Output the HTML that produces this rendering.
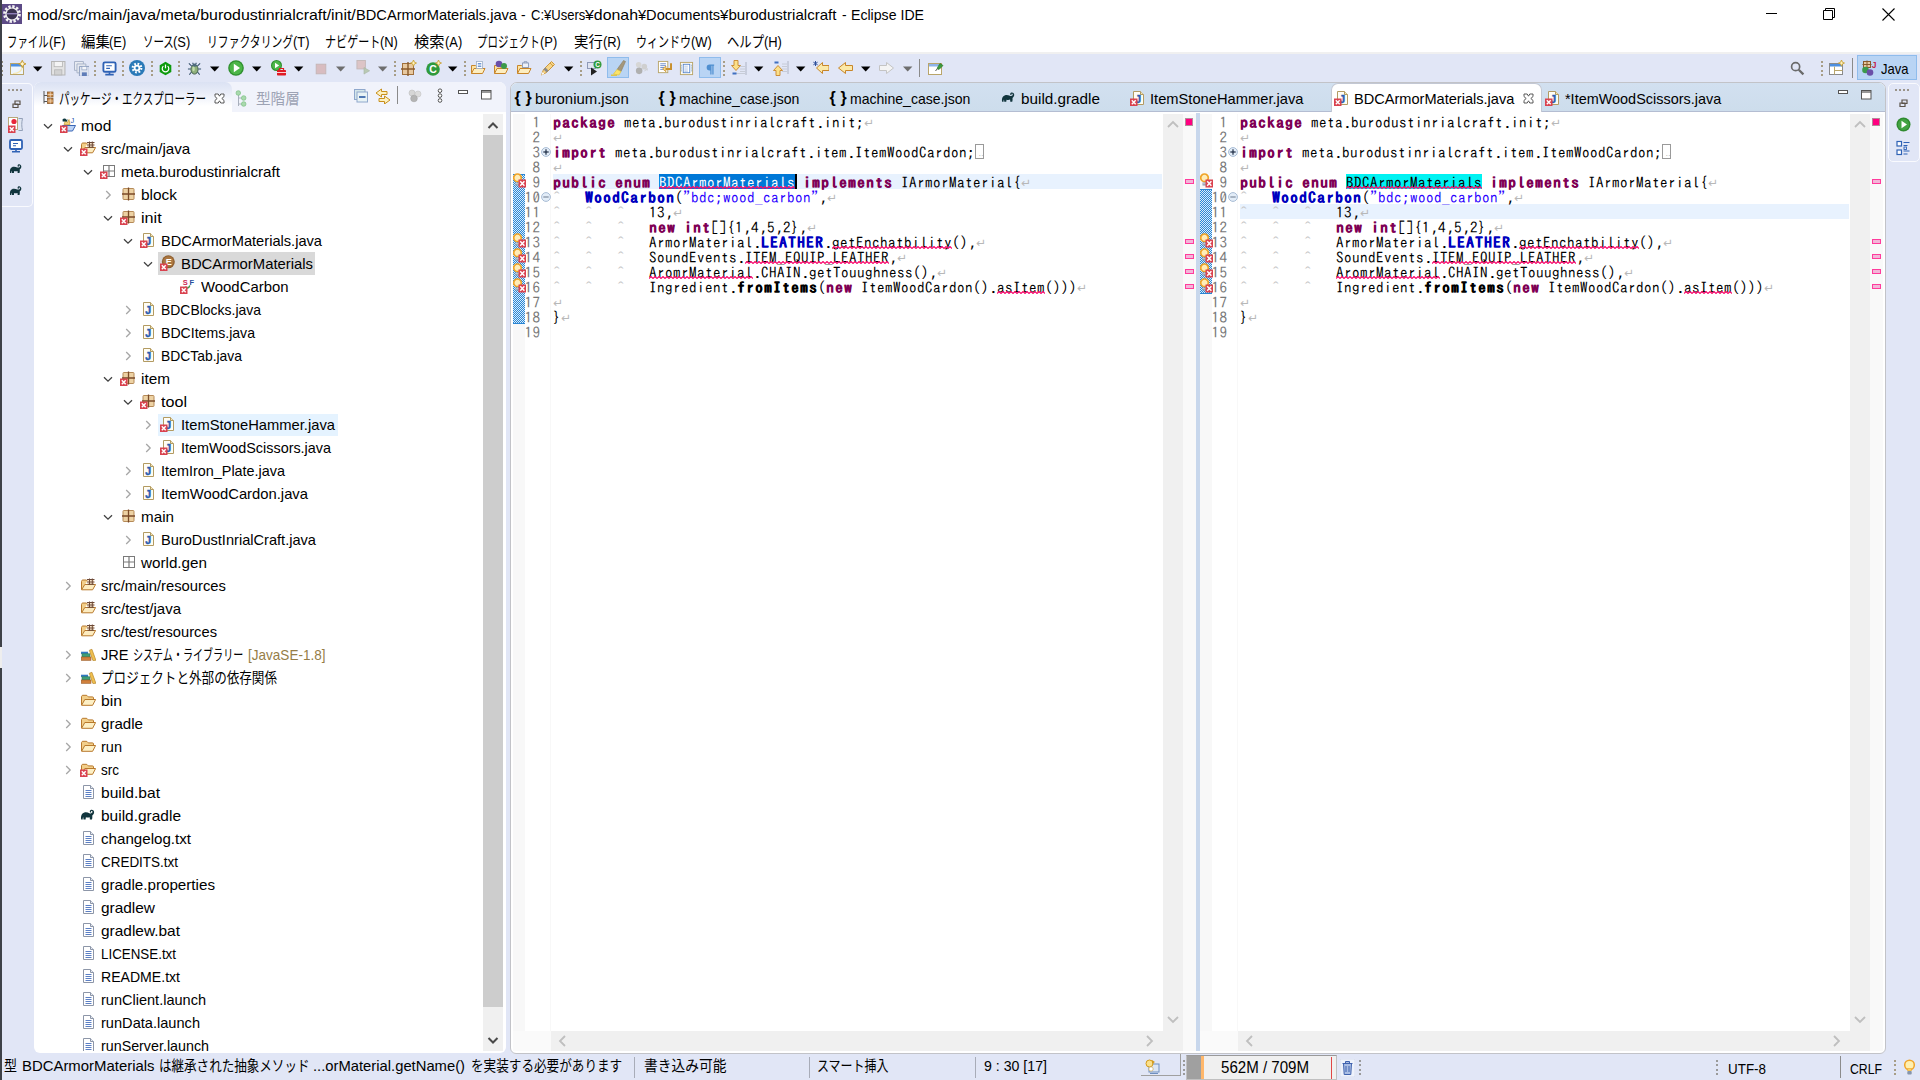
<!DOCTYPE html><html lang="ja"><head><meta charset="utf-8"><title>Eclipse IDE</title><style>
html,body{margin:0;padding:0}
body{width:1920px;height:1080px;overflow:hidden;background:#e1e6f6;position:relative;font-family:'Liberation Sans','Noto Sans CJK JP',sans-serif;font-size:15px}
div,svg,.t{position:absolute}
.t{white-space:pre;line-height:20px}
.r{display:inline-block;white-space:pre}
.r>span{display:inline-block;transform-origin:0 50%;white-space:pre}
.code{font-family:'IPAGothic','Liberation Mono',monospace;font-size:15px;letter-spacing:.5px;line-height:15px;height:15px;white-space:pre;color:#000}
.code b{letter-spacing:1.5px;font-weight:bold;text-shadow:.45px 0 0 currentColor}
.k{color:#7f0055} .s{color:#2a00ff} .f{color:#0000c0}
.ws{color:#c4c4c4}
.p{position:relative;left:2px;font-style:normal}
.er{}
.ln{font-family:'IPAGothic','Liberation Mono',monospace;font-size:15px;letter-spacing:.5px;line-height:15px;height:15px;color:#787878;text-align:right;white-space:pre}
.nl{display:inline-block;width:8px;color:#b8b8b8;letter-spacing:0;font-family:'DejaVu Sans',sans-serif;font-size:12px;vertical-align:top;line-height:16px;font-weight:normal;font-style:normal;text-shadow:none}
.fold{display:inline-block;width:9px;height:15px;border:1px solid #9a9a9a;vertical-align:top;margin-top:-.6px;box-sizing:border-box;font-size:5px;line-height:20px;letter-spacing:0;color:#777;font-style:normal;overflow:hidden;text-align:center}
</style></head><body>
<svg width="0" height="0" style="position:absolute"><defs><symbol id="err" viewBox="0 0 16 16"><rect x="0" y="8.5" width="7.5" height="7.5" fill="#d9424f"/><path d="M1.8 10.3l3.9 3.9M5.7 10.3l-3.9 3.9" stroke="#fff" stroke-width="1.4"/></symbol><symbol id="pkg" viewBox="0 0 16 16"><rect x="3" y="2.500" width="11" height="11" rx=".8" fill="#edd2a4" stroke="#b58a58"/><path d="M8.500 1.500v13M2 8h13" stroke="#7a4a28" stroke-width="1.300"/></symbol><symbol id="pkg_e" viewBox="0 0 16 16"><rect x="3" y="2.500" width="11" height="11" rx=".8" fill="#edd2a4" stroke="#b58a58"/><path d="M8.500 1.500v13M2 8h13" stroke="#7a4a28" stroke-width="1.300"/><rect x="0" y="8.5" width="7.5" height="7.5" fill="#d9424f"/><path d="M1.8 10.3l3.9 3.9M5.7 10.3l-3.9 3.9" stroke="#fff" stroke-width="1.4"/></symbol><symbol id="pkgempty" viewBox="0 0 16 16"><rect x="3.5" y="2.5" width="11" height="11" fill="#fff" stroke="#7a7a7a"/><path d="M9 2.5v11M3.5 8h11" stroke="#7a7a7a" stroke-width="1.2"/></symbol><symbol id="pkgempty_e" viewBox="0 0 16 16"><rect x="3.5" y="2.5" width="11" height="11" fill="#fff" stroke="#7a7a7a"/><path d="M9 2.5v11M3.5 8h11" stroke="#7a7a7a" stroke-width="1.2"/><rect x="0" y="8.5" width="7.5" height="7.5" fill="#d9424f"/><path d="M1.8 10.3l3.9 3.9M5.7 10.3l-3.9 3.9" stroke="#fff" stroke-width="1.4"/></symbol><symbol id="java" viewBox="0 0 16 16"><path d="M3.5 1.5h7l3 3v10h-10z" fill="#fffdf5" stroke="#b39b62"/><path d="M10.5 1.5v3h3" fill="#f3e5b8" stroke="#b39b62"/><text x="5.200" y="12.500" font-family="Liberation Sans,sans-serif" font-weight="bold" font-size="10.500" fill="#2a5db0" stroke="#2a5db0" stroke-width=".5">J</text></symbol><symbol id="java_e" viewBox="0 0 16 16"><path d="M3.5 1.5h7l3 3v10h-10z" fill="#fffdf5" stroke="#b39b62"/><path d="M10.5 1.5v3h3" fill="#f3e5b8" stroke="#b39b62"/><text x="5.200" y="12.500" font-family="Liberation Sans,sans-serif" font-weight="bold" font-size="10.500" fill="#2a5db0" stroke="#2a5db0" stroke-width=".5">J</text><rect x="0" y="8.5" width="7.5" height="7.5" fill="#d9424f"/><path d="M1.8 10.3l3.9 3.9M5.7 10.3l-3.9 3.9" stroke="#fff" stroke-width="1.4"/></symbol><symbol id="file" viewBox="0 0 16 16"><path d="M3.5 1.5h7l3 3v10h-10z" fill="#fff" stroke="#8d96a8"/><path d="M10.5 1.5v3h3" fill="#e6eaf2" stroke="#8d96a8"/><path d="M5.5 6.5h6M5.5 8.5h6M5.5 10.5h6M5.5 12.5h6" stroke="#5b7fc4" stroke-width="1"/></symbol><symbol id="folder" viewBox="0 0 16 16"><path d="M1.500 13V4.800c0-.9.600-1.500 1.500-1.500h3.200c.7 0 1 .3 1.500.9l.6.700h4.200c.7 0 1 .4 1 1v1.600" fill="#f2cf8a" stroke="#b8792c"/><path d="M1.600 13.300l3.200-5.800h10.800l-3 5.800z" fill="#fdf0c6" stroke="#b8792c" stroke-linejoin="round"/></symbol><symbol id="folder_e" viewBox="0 0 16 16"><path d="M1.500 13V4.800c0-.9.600-1.500 1.500-1.500h3.200c.7 0 1 .3 1.500.9l.6.700h4.200c.7 0 1 .4 1 1v1.600" fill="#f2cf8a" stroke="#b8792c"/><path d="M1.600 13.300l3.200-5.800h10.800l-3 5.800z" fill="#fdf0c6" stroke="#b8792c" stroke-linejoin="round"/><rect x="0" y="8.5" width="7.5" height="7.5" fill="#d9424f"/><path d="M1.8 10.3l3.9 3.9M5.7 10.3l-3.9 3.9" stroke="#fff" stroke-width="1.4"/></symbol><symbol id="src" viewBox="0 0 16 16"><path d="M1.500 12.500V4.500c0-.9.600-1.500 1.500-1.500h3.500l1 1" fill="#f2cf8a" stroke="#b8792c"/><path d="M1.600 12.800l3.200-5.300h10.800l-3 5.300z" fill="#fdecc0" stroke="#b8792c" stroke-linejoin="round"/><rect x="7.500" y="2.200" width="6.500" height="5" fill="#f6e3c8" stroke="none"/><path d="M7 2.500h7.500M7 5h7.500M9.500 1.500v6M12.300 1.500v6M7.500 7.300h6.500" stroke="#6e4a38" stroke-width="1" fill="none"/></symbol><symbol id="src_e" viewBox="0 0 16 16"><path d="M1.500 12.500V4.500c0-.9.600-1.500 1.500-1.500h3.500l1 1" fill="#f2cf8a" stroke="#b8792c"/><path d="M1.600 12.800l3.200-5.300h10.800l-3 5.300z" fill="#fdecc0" stroke="#b8792c" stroke-linejoin="round"/><rect x="7.500" y="2.200" width="6.500" height="5" fill="#f6e3c8" stroke="none"/><path d="M7 2.500h7.500M7 5h7.500M9.500 1.500v6M12.300 1.500v6M7.500 7.300h6.500" stroke="#6e4a38" stroke-width="1" fill="none"/><rect x="0" y="8.5" width="7.5" height="7.5" fill="#d9424f"/><path d="M1.8 10.3l3.9 3.9M5.7 10.3l-3.9 3.9" stroke="#fff" stroke-width="1.4"/></symbol><symbol id="proj_e" viewBox="0 0 16 16"><path d="M2.5 8.5h13l-3 5.5h-10z" fill="#bcd3f5" stroke="#3b66b5"/><path d="M4 7.5l1.5-4 2 2 1.5-3 1 5z" fill="#f4d27a" stroke="#c69a2c" stroke-width=".7"/><path d="M2.5 2.5c1-1.5 3.5-1.5 4 .5l1-1-.3 2.5h-4.5z" fill="#0f3a40"/><text x="10.500" y="6" font-family="Liberation Sans,sans-serif" font-size="7.500" fill="#2a5db0">J</text><rect x="0" y="8.5" width="7.5" height="7.5" fill="#d9424f"/><path d="M1.8 10.3l3.9 3.9M5.7 10.3l-3.9 3.9" stroke="#fff" stroke-width="1.4"/></symbol><symbol id="enum_e" viewBox="0 0 16 16"><circle cx="8.300" cy="6.800" r="6.500" fill="#8f5f30"/><circle cx="8.300" cy="6.500" r="5.200" fill="#ab7741"/><text x="5.800" y="10" font-family="Liberation Sans,sans-serif" font-weight="bold" font-size="9" fill="#fff">E</text><rect x="0" y="8.5" width="7.5" height="7.5" fill="#d9424f"/><path d="M1.8 10.3l3.9 3.9M5.7 10.3l-3.9 3.9" stroke="#fff" stroke-width="1.4"/></symbol><symbol id="field_e" viewBox="0 0 16 16"><text x="2.800" y="7.200" font-family="Liberation Sans,sans-serif" font-size="7.500" font-weight="bold" fill="#cc2a52">S</text><text x="9.500" y="7.200" font-family="Liberation Sans,sans-serif" font-size="7.500" font-weight="bold" fill="#27509b">F</text><path d="M5.500 8.500c.8 2.200 3.300 2.200 4.300-1" fill="none" stroke="#3a9a4a" stroke-width="1.500"/><rect x="0" y="8.5" width="7.5" height="7.5" fill="#d9424f"/><path d="M1.8 10.3l3.9 3.9M5.7 10.3l-3.9 3.9" stroke="#fff" stroke-width="1.4"/></symbol><symbol id="lib" viewBox="0 0 16 16"><rect x="1.300" y="6" width="6.500" height="1.800" fill="#2f7fd0" stroke="#2464a8" stroke-width=".5"/><rect x="2" y="7.800" width="8" height="3.200" fill="#3f9f78" stroke="#2c7a58" stroke-width=".6"/><rect x="1.300" y="11" width="9.700" height="3.300" fill="#d0803c" stroke="#9c5a24" stroke-width=".6"/><path d="M9.300 4.300l2.600-1 4 11-3 .2z" fill="#f0c050" stroke="#b8862a" stroke-width=".7"/></symbol><symbol id="gradle" viewBox="0 0 16 16"><path d="M1.2 12.5c-.6-3 .2-6.2 3.2-7 2-.5 3.6.2 5 .7 1.2.4 2.5.2 3-.9.4-.9-.5-1.7-1.2-1.1-.5.4-.1 1 .4.9-.6.8-2 .3-1.8-.9.2-1.5 2.3-2 3.5-.9 1.5 1.4.9 4-1 5.1.2 1.5 0 3-.3 4.1h-2.1l-.2-2.3c-1.2.5-2.6.5-3.8.1l-.3 2.2H3.5l-.3-2.4c-.4.6-.6 1.5-.5 2.4z" fill="#11353d"/></symbol><symbol id="tw_open" viewBox="0 0 16 16"><path d="M4 6.200l4 4 4-4" fill="none" stroke="#404040" stroke-width="1.300"/></symbol><symbol id="tw_closed" viewBox="0 0 16 16"><path d="M6.200 4l4 4-4 4" fill="none" stroke="#a6a6a6" stroke-width="1.300"/></symbol><symbol id="qfix" viewBox="0 0 16 16"><circle cx="4.500" cy="4.800" r="3.800" fill="#ffedb8" stroke="#f0a428" stroke-width="1.700"/><path d="M2.500 9.500h4v3h-4z" fill="#8a96a8"/><path d="M2.500 10.800h4" stroke="#dfe4ec" stroke-width=".8"/><rect x="5.500" y="6.500" width="7.500" height="8" fill="#d9424f"/><path d="M7.200 8.300l4.200 4.400M11.400 8.300l-4.200 4.400" stroke="#fff" stroke-width="1.500"/></symbol></defs></svg>
<div style="left:0px;top:0px;width:1920px;height:52px;background:#fff;"></div>
<div style="left:0px;top:52px;width:1920px;height:2px;background:#f0f0f0;"></div>
<div style="left:0px;top:0px;width:2px;height:1080px;background:#3e4148;"></div>
<div style="left:0px;top:647px;width:2px;height:21px;background:#eeeeee;"></div>
<svg style="left:2px;top:4px;" width="20" height="20" viewBox="0 0 20 20"><rect width="20" height="20" fill="#5c4a86"/><circle cx="10" cy="10" r="7.4" fill="none" stroke="#f2f2f2" stroke-width="3" stroke-dasharray="2.3 1.58"/><circle cx="10" cy="10" r="6.6" fill="#f2f2f2"/><circle cx="10" cy="10" r="5.4" fill="#3a3350"/><rect x="5" y="9" width="10" height="1.4" fill="#8f80b8"/></svg>
<span class="t" style="left:27px;top:5.00px;font-size:15px;color:#000;"><span class="r" style="width:328.80px"><span style="transform:scaleX(1.0602)">mod/src/main/java/meta/burodustinrialcraft/init/</span></span></span>
<span class="t" style="left:355.5px;top:5.00px;font-size:15px;color:#000;"><span class="r" style="width:161.00px"><span style="transform:scaleX(0.9755)">BDCArmorMaterials.java</span></span></span>
<span class="t" style="left:520.7px;top:5.00px;font-size:15px;color:#000;"><span class="r" style="width:4.60px"><span style="transform:scaleX(0.9200)">-</span></span></span>
<span class="t" style="left:530.7px;top:5.00px;font-size:15px;color:#000;"><span class="r" style="width:13.00px"><span style="transform:scaleX(0.8667)">C:</span></span></span>
<span class="t" style="left:543.7px;top:5.00px;font-size:15px;color:#000;"><span class="r" style="width:41.30px"><span style="transform:scaleX(0.8692)">¥Users</span></span></span>
<span class="t" style="left:585px;top:5.00px;font-size:15px;color:#000;"><span class="r" style="width:53.00px"><span style="transform:scaleX(1.0587)">¥donah</span></span></span>
<span class="t" style="left:638px;top:5.00px;font-size:15px;color:#000;"><span class="r" style="width:82.00px"><span style="transform:scaleX(0.9737)">¥Documents</span></span></span>
<span class="t" style="left:720px;top:5.00px;font-size:15px;color:#000;"><span class="r" style="width:116.50px"><span style="transform:scaleX(1.0051)">¥burodustrialcraft</span></span></span>
<span class="t" style="left:842px;top:5.00px;font-size:15px;color:#000;"><span class="r" style="width:4.60px"><span style="transform:scaleX(0.9200)">-</span></span></span>
<span class="t" style="left:850.5px;top:5.00px;font-size:15px;color:#000;"><span class="r" style="width:73.00px"><span style="transform:scaleX(0.9416)">Eclipse IDE</span></span></span>
<div style="left:1766px;top:13px;width:11px;height:1px;background:#000;"></div>
<svg style="left:1823px;top:8px;" width="12" height="12" viewBox="0 0 12 12"><path d="M.5 2.5h9v9h-9zM2.5 2.5v-2h9v9h-2" fill="none" stroke="#000"/></svg>
<svg style="left:1882px;top:8px;" width="13" height="13" viewBox="0 0 13 13"><path d="M.5.5l12 12M12.5.5l-12 12" stroke="#000" stroke-width="1.1"/></svg>
<span class="t" style="left:7px;top:32.10px;font-size:15px;color:#000;"><span class="r" style="width:41.53px"><span style="transform:scaleX(0.6919)">ファイル</span></span><span class="r" style="width:16.47px"><span style="transform:scaleX(0.8600)">(F)</span></span></span>
<span class="t" style="left:80.7px;top:32.10px;font-size:15px;color:#000;"><span class="r" style="width:28.80px"><span style="transform:scaleX(0.9595)">編集</span></span><span class="r" style="width:17.20px"><span style="transform:scaleX(0.8600)">(E)</span></span></span>
<span class="t" style="left:142.7px;top:32.10px;font-size:15px;color:#000;"><span class="r" style="width:30.80px"><span style="transform:scaleX(0.6958)">ソース</span></span><span class="r" style="width:17.20px"><span style="transform:scaleX(0.8600)">(S)</span></span></span>
<span class="t" style="left:206.7px;top:32.10px;font-size:15px;color:#000;"><span class="r" style="width:86.13px"><span style="transform:scaleX(0.7213)">リファクタリング</span></span><span class="r" style="width:16.47px"><span style="transform:scaleX(0.8600)">(T)</span></span></span>
<span class="t" style="left:325px;top:32.10px;font-size:15px;color:#000;"><span class="r" style="width:55.39px"><span style="transform:scaleX(0.7384)">ナビゲート</span></span><span class="r" style="width:17.91px"><span style="transform:scaleX(0.8600)">(N)</span></span></span>
<span class="t" style="left:414px;top:32.10px;font-size:15px;color:#000;"><span class="r" style="width:30.50px"><span style="transform:scaleX(1.0161)">検索</span></span><span class="r" style="width:17.20px"><span style="transform:scaleX(0.8600)">(A)</span></span></span>
<span class="t" style="left:477.3px;top:32.10px;font-size:15px;color:#000;"><span class="r" style="width:62.80px"><span style="transform:scaleX(0.6977)">プロジェクト</span></span><span class="r" style="width:17.20px"><span style="transform:scaleX(0.8600)">(P)</span></span></span>
<span class="t" style="left:574px;top:32.10px;font-size:15px;color:#000;"><span class="r" style="width:28.79px"><span style="transform:scaleX(0.9591)">実行</span></span><span class="r" style="width:17.91px"><span style="transform:scaleX(0.8600)">(R)</span></span></span>
<span class="t" style="left:636px;top:32.10px;font-size:15px;color:#000;"><span class="r" style="width:54.93px"><span style="transform:scaleX(0.7322)">ウィンドウ</span></span><span class="r" style="width:20.77px"><span style="transform:scaleX(0.8600)">(W)</span></span></span>
<span class="t" style="left:727.3px;top:32.10px;font-size:15px;color:#000;"><span class="r" style="width:37.09px"><span style="transform:scaleX(0.8239)">ヘルプ</span></span><span class="r" style="width:17.91px"><span style="transform:scaleX(0.8600)">(H)</span></span></span>
<div style="left:2px;top:83px;width:30.5px;height:123.5px;background:none;border:1.500px solid #f9fafe;border-left:none;border-radius:0 5px 5px 0;box-sizing:border-box"></div>
<div style="left:8px;top:89px;width:2px;height:2px;background:#9a948a;"></div>
<div style="left:12px;top:89px;width:2px;height:2px;background:#9a948a;"></div>
<div style="left:16px;top:89px;width:2px;height:2px;background:#9a948a;"></div>
<div style="left:20px;top:89px;width:2px;height:2px;background:#9a948a;"></div>
<svg style="left:11.5px;top:99.5px;" width="9" height="9" viewBox="0 0 9 9"><path d="M3 1h5v3.500h-5zM1 4h5v3.500h-5z" fill="#e1e6f6" stroke="#5a5148" stroke-width="1.200"/></svg>
<svg style="left:8px;top:117px;" width="16" height="16" viewBox="0 0 16 16"><rect x=".5" y=".5" width="9" height="12" fill="#fff" stroke="#b8a97a"/><circle cx="6" cy="4.5" r="2.6" fill="#e8273a"/><path d="M10.5 1.5h4c-1 4-1 8 0 12h-4" fill="#dfe6f2" stroke="#93a0b8"/><rect x="0" y="8.5" width="7.5" height="7.5" fill="#d9424f"/><path d="M1.8 10.3l3.9 3.9M5.7 10.3l-3.9 3.9" stroke="#fff" stroke-width="1.4"/></svg>
<svg style="left:9px;top:139px;" width="14" height="14" viewBox="0 0 14 14"><rect x="1" y="1" width="12" height="9" rx="1.2" fill="#fff" stroke="#2f62b5" stroke-width="1.8"/><path d="M4 4.5h5M4 6.8h3" stroke="#2f62b5" stroke-width="1.1"/><path d="M3 12.8h8M7 10v2.5" stroke="#2f62b5" stroke-width="1.6"/></svg>
<svg style="left:9px;top:162px;" width="14" height="14"><use href="#gradle"/></svg>
<svg style="left:9px;top:184px;" width="14" height="14"><use href="#gradle"/></svg>
<div style="left:34px;top:82px;width:472px;height:971px;background:#fff;border-radius:7px 7px 6px 6px;overflow:hidden"></div>
<div style="left:34px;top:82px;width:472px;height:29.5px;background:#f1f3fb;border-radius:7px 7px 0 0"></div>
<div style="left:34px;top:82px;width:197.5px;height:30px;background:linear-gradient(#dbe2f3,#e9edf8 35%,#fff 80%);border-radius:7px 7px 0 0"></div>
<svg style="left:42.5px;top:91px;" width="11" height="13" viewBox="0 0 11 13"><path d="M1 0v12.500M1 4.500h3M1 10.500h3" stroke="#555" fill="none"/><rect x="4.500" y="1" width="5.500" height="5" fill="#c98a4a" stroke="#8a5a2b" stroke-width=".8"/><rect x="4.500" y="7.500" width="5.500" height="5" fill="#c98a4a" stroke="#8a5a2b" stroke-width=".8"/><path d="M7.250 1v5M7.250 7.500v5M4.500 3.500h5.500M4.500 10h5.500" stroke="#f3dcc0" stroke-width=".7"/></svg>
<span class="t" style="left:58.5px;top:88.80px;font-size:15px;color:#000;"><span class="r" style="width:147.00px"><span style="transform:scaleX(0.7025)">パッケージ・エクスプローラー</span></span></span>
<svg style="left:213.5px;top:92.8px;" width="11" height="11" viewBox="0 0 11 11"><path d="M1 1l3.2 0 1.3 2.2L6.8 1 10 1 10 3.6 7.8 5.5 10 7.4 10 10 6.8 10 5.5 7.8 4.2 10 1 10 1 7.4 3.2 5.5 1 3.6z" fill="#fff" stroke="#484848" stroke-width=".900"/></svg>
<svg style="left:235px;top:89.5px;" width="12" height="17" viewBox="0 0 12 17"><path d="M3.500 5v11M3.500 8h3M3.500 14h3" stroke="#a9b0bd" fill="none"/><circle cx="3.300" cy="3" r="2.300" fill="#a9d9ad" stroke="#7cc084" stroke-width=".7"/><circle cx="8.700" cy="8" r="2.300" fill="#a9d9ad" stroke="#7cc084" stroke-width=".7"/><circle cx="8.700" cy="14" r="2.300" fill="#a9d9ad" stroke="#7cc084" stroke-width=".7"/></svg>
<span class="t" style="left:255.6px;top:88.80px;font-size:15px;color:#9da3b4;"><span class="r" style="width:43.80px"><span style="transform:scaleX(0.9730)">型階層</span></span></span>
<svg style="left:353.5px;top:88.5px;" width="14" height="14" viewBox="0 0 14 14"><rect x=".5" y=".5" width="10.500" height="10" fill="#d4e6ea" stroke="#8fa8cc"/><rect x="3" y="3" width="10.500" height="10" fill="#e9f3f5" stroke="#8fa8cc"/><path d="M5 8h6.500" stroke="#1c4f9c" stroke-width="1.500"/></svg>
<svg style="left:375px;top:87.5px;" width="16" height="16" viewBox="0 0 16 16"><path d="M12 3.500H6.500V1L1 5l5.500 4V6.500H12z" fill="#fdf0c0" stroke="#c8901c" stroke-linejoin="round"/><path d="M4 10.500h5.500V8l5.500 4-5.500 4v-2.500H4z" fill="#fdf0c0" stroke="#c8901c" stroke-linejoin="round"/></svg>
<div style="left:397px;top:86px;width:1px;height:18px;background:#8a8a8a;"></div>
<svg style="left:408px;top:89px;" width="14" height="14" viewBox="0 0 14 14"><circle cx="4" cy="4" r="3" fill="#d6d6d6" stroke="#bdbdbd" stroke-width=".6"/><circle cx="10" cy="5" r="3" fill="#dcdcdc" stroke="#c4c4c4" stroke-width=".6"/><circle cx="6" cy="9.500" r="3.300" fill="#b4b4b4" stroke="#a4a4a4" stroke-width=".6"/></svg>
<svg style="left:437.4px;top:87.8px;" width="6" height="16" viewBox="0 0 6 16"><circle cx="3" cy="2.700" r="1.800" fill="#fff" stroke="#444" stroke-width=".9"/><circle cx="3" cy="7.600" r="1.800" fill="#fff" stroke="#444" stroke-width=".9"/><circle cx="3" cy="12.500" r="1.800" fill="#fff" stroke="#444" stroke-width=".9"/></svg>
<div style="left:458px;top:90px;width:10px;height:4px;background:#fff;border:1px solid #555;box-sizing:border-box"></div>
<svg style="left:481px;top:90px;" width="11" height="10" viewBox="0 0 11 10"><rect x=".5" y=".5" width="9.500" height="8.500" fill="#fff" stroke="#555"/><path d="M.5 2h9.500" stroke="#555" stroke-width="1.200"/></svg>
<div style="left:483px;top:114px;width:20px;height:937px;background:#f0f0f0;"></div>
<div style="left:483px;top:135px;width:20px;height:872.3px;background:#cdcdcd;"></div>
<svg style="left:486px;top:119.5px;" width="14" height="10" viewBox="0 0 14 10"><path d="M2.500 8l4.500-4.500 4.500 4.500" fill="none" stroke="#4a4a4a" stroke-width="2"/></svg>
<svg style="left:486px;top:1035.5px;" width="14" height="10" viewBox="0 0 14 10"><path d="M2.500 2l4.500 4.500 4.500-4.500" fill="none" stroke="#4a4a4a" stroke-width="2"/></svg>
<div style="left:34px;top:112px;width:449px;height:939px;overflow:hidden">
<div style="left:124px;top:140.3px;width:157px;height:22.5px;background:#d9d9d9;"></div>
<div style="left:124px;top:302px;width:180px;height:22px;background:#e5f3ff;"></div>
<svg style="left:5.5px;top:6px;" width="16" height="16"><use href="#tw_open"/></svg>
<svg style="left:26px;top:5px;" width="16" height="16"><use href="#proj_e"/></svg>
<span class="t" style="left:47px;top:4.00px;font-size:15px;color:#000;"><span class="r" style="width:30.30px"><span style="transform:scaleX(1.0381)">mod</span></span></span>
<svg style="left:25.5px;top:29px;" width="16" height="16"><use href="#tw_open"/></svg>
<svg style="left:46px;top:28px;" width="16" height="16"><use href="#src_e"/></svg>
<span class="t" style="left:67px;top:27.00px;font-size:15px;color:#000;"><span class="r" style="width:89.30px"><span style="transform:scaleX(1.0106)">src/main/java</span></span></span>
<svg style="left:45.5px;top:52px;" width="16" height="16"><use href="#tw_open"/></svg>
<svg style="left:66px;top:51px;" width="16" height="16"><use href="#pkgempty_e"/></svg>
<span class="t" style="left:87px;top:50.00px;font-size:15px;color:#000;"><span class="r" style="width:159.00px"><span style="transform:scaleX(1.0144)">meta.burodustinrialcraft</span></span></span>
<svg style="left:65.5px;top:75px;" width="16" height="16"><use href="#tw_closed"/></svg>
<svg style="left:86px;top:74px;" width="16" height="16"><use href="#pkg"/></svg>
<span class="t" style="left:107px;top:73.00px;font-size:15px;color:#000;"><span class="r" style="width:36.00px"><span style="transform:scaleX(1.0277)">block</span></span></span>
<svg style="left:65.5px;top:98px;" width="16" height="16"><use href="#tw_open"/></svg>
<svg style="left:86px;top:97px;" width="16" height="16"><use href="#pkg_e"/></svg>
<span class="t" style="left:107px;top:96.00px;font-size:15px;color:#000;"><span class="r" style="width:20.70px"><span style="transform:scaleX(1.0788)">init</span></span></span>
<svg style="left:85.5px;top:121px;" width="16" height="16"><use href="#tw_open"/></svg>
<svg style="left:106px;top:120px;" width="16" height="16"><use href="#java_e"/></svg>
<span class="t" style="left:127px;top:119.00px;font-size:15px;color:#000;"><span class="r" style="width:161.00px"><span style="transform:scaleX(0.9755)">BDCArmorMaterials.java</span></span></span>
<svg style="left:105.5px;top:144px;" width="16" height="16"><use href="#tw_open"/></svg>
<svg style="left:126px;top:143px;" width="16" height="16"><use href="#enum_e"/></svg>
<span class="t" style="left:147px;top:142.00px;font-size:15px;color:#000;"><span class="r" style="width:132.00px"><span style="transform:scaleX(0.9898)">BDCArmorMaterials</span></span></span>
<svg style="left:146px;top:166px;" width="16" height="16"><use href="#field_e"/></svg>
<span class="t" style="left:167px;top:165.00px;font-size:15px;color:#000;"><span class="r" style="width:87.50px"><span style="transform:scaleX(0.9929)">WoodCarbon</span></span></span>
<svg style="left:85.5px;top:190px;" width="16" height="16"><use href="#tw_closed"/></svg>
<svg style="left:106px;top:189px;" width="16" height="16"><use href="#java"/></svg>
<span class="t" style="left:127px;top:188.00px;font-size:15px;color:#000;"><span class="r" style="width:100.00px"><span style="transform:scaleX(0.9298)">BDCBlocks.java</span></span></span>
<svg style="left:85.5px;top:213px;" width="16" height="16"><use href="#tw_closed"/></svg>
<svg style="left:106px;top:212px;" width="16" height="16"><use href="#java"/></svg>
<span class="t" style="left:127px;top:211.00px;font-size:15px;color:#000;"><span class="r" style="width:94.00px"><span style="transform:scaleX(0.9397)">BDCItems.java</span></span></span>
<svg style="left:85.5px;top:236px;" width="16" height="16"><use href="#tw_closed"/></svg>
<svg style="left:106px;top:235px;" width="16" height="16"><use href="#java"/></svg>
<span class="t" style="left:127px;top:234.00px;font-size:15px;color:#000;"><span class="r" style="width:81.00px"><span style="transform:scaleX(0.9252)">BDCTab.java</span></span></span>
<svg style="left:65.5px;top:259px;" width="16" height="16"><use href="#tw_open"/></svg>
<svg style="left:86px;top:258px;" width="16" height="16"><use href="#pkg_e"/></svg>
<span class="t" style="left:107px;top:257.00px;font-size:15px;color:#000;"><span class="r" style="width:29.00px"><span style="transform:scaleX(1.0232)">item</span></span></span>
<svg style="left:85.5px;top:282px;" width="16" height="16"><use href="#tw_open"/></svg>
<svg style="left:106px;top:281px;" width="16" height="16"><use href="#pkg_e"/></svg>
<span class="t" style="left:127px;top:280.00px;font-size:15px;color:#000;"><span class="r" style="width:26.00px"><span style="transform:scaleX(1.0749)">tool</span></span></span>
<svg style="left:105.5px;top:305px;" width="16" height="16"><use href="#tw_closed"/></svg>
<svg style="left:126px;top:304px;" width="16" height="16"><use href="#java_e"/></svg>
<span class="t" style="left:147px;top:303.00px;font-size:15px;color:#000;"><span class="r" style="width:154.00px"><span style="transform:scaleX(0.9826)">ItemStoneHammer.java</span></span></span>
<svg style="left:105.5px;top:328px;" width="16" height="16"><use href="#tw_closed"/></svg>
<svg style="left:126px;top:327px;" width="16" height="16"><use href="#java_e"/></svg>
<span class="t" style="left:147px;top:326.00px;font-size:15px;color:#000;"><span class="r" style="width:150.00px"><span style="transform:scaleX(0.9588)">ItemWoodScissors.java</span></span></span>
<svg style="left:85.5px;top:351px;" width="16" height="16"><use href="#tw_closed"/></svg>
<svg style="left:106px;top:350px;" width="16" height="16"><use href="#java"/></svg>
<span class="t" style="left:127px;top:349.00px;font-size:15px;color:#000;"><span class="r" style="width:124.00px"><span style="transform:scaleX(0.9594)">ItemIron_Plate.java</span></span></span>
<svg style="left:85.5px;top:374px;" width="16" height="16"><use href="#tw_closed"/></svg>
<svg style="left:106px;top:373px;" width="16" height="16"><use href="#java"/></svg>
<span class="t" style="left:127px;top:372.00px;font-size:15px;color:#000;"><span class="r" style="width:147.00px"><span style="transform:scaleX(0.9868)">ItemWoodCardon.java</span></span></span>
<svg style="left:65.5px;top:397px;" width="16" height="16"><use href="#tw_open"/></svg>
<svg style="left:86px;top:396px;" width="16" height="16"><use href="#pkg"/></svg>
<span class="t" style="left:107px;top:395.00px;font-size:15px;color:#000;"><span class="r" style="width:33.00px"><span style="transform:scaleX(1.0149)">main</span></span></span>
<svg style="left:85.5px;top:420px;" width="16" height="16"><use href="#tw_closed"/></svg>
<svg style="left:106px;top:419px;" width="16" height="16"><use href="#java"/></svg>
<span class="t" style="left:127px;top:418.00px;font-size:15px;color:#000;"><span class="r" style="width:155.00px"><span style="transform:scaleX(0.9734)">BuroDustInrialCraft.java</span></span></span>
<svg style="left:86px;top:442px;" width="16" height="16"><use href="#pkgempty"/></svg>
<span class="t" style="left:107px;top:441.00px;font-size:15px;color:#000;"><span class="r" style="width:66.00px"><span style="transform:scaleX(1.0147)">world.gen</span></span></span>
<svg style="left:25.5px;top:466px;" width="16" height="16"><use href="#tw_closed"/></svg>
<svg style="left:46px;top:465px;" width="16" height="16"><use href="#src"/></svg>
<span class="t" style="left:67px;top:464.00px;font-size:15px;color:#000;"><span class="r" style="width:125.00px"><span style="transform:scaleX(0.9866)">src/main/resources</span></span></span>
<svg style="left:46px;top:488px;" width="16" height="16"><use href="#src"/></svg>
<span class="t" style="left:67px;top:487.00px;font-size:15px;color:#000;"><span class="r" style="width:80.00px"><span style="transform:scaleX(0.9996)">src/test/java</span></span></span>
<svg style="left:46px;top:511px;" width="16" height="16"><use href="#src"/></svg>
<span class="t" style="left:67px;top:510.00px;font-size:15px;color:#000;"><span class="r" style="width:116.00px"><span style="transform:scaleX(0.9799)">src/test/resources</span></span></span>
<svg style="left:25.5px;top:535px;" width="16" height="16"><use href="#tw_closed"/></svg>
<svg style="left:46px;top:534px;" width="16" height="16"><use href="#lib"/></svg>
<span class="t" style="left:67px;top:533.00px;font-size:15px;color:#000;"><span class="r" style="width:31.70px"><span style="transform:scaleX(0.9750)">JRE </span></span><span class="r" style="width:110.30px"><span style="transform:scaleX(0.6702)">システム・ライブラリー</span></span></span>
<span class="t" style="left:213.5px;top:533.00px;font-size:15px;color:#957d47;"><span class="r" style="width:77.50px"><span style="transform:scaleX(0.9023)">[JavaSE-1.8]</span></span></span>
<svg style="left:25.5px;top:558px;" width="16" height="16"><use href="#tw_closed"/></svg>
<svg style="left:46px;top:557px;" width="16" height="16"><use href="#lib"/></svg>
<span class="t" style="left:67px;top:556.00px;font-size:15px;color:#000;"><span class="r" style="width:176.00px"><span style="transform:scaleX(0.8380)">プロジェクトと外部の依存関係</span></span></span>
<svg style="left:46px;top:580px;" width="16" height="16"><use href="#folder"/></svg>
<span class="t" style="left:67px;top:579.00px;font-size:15px;color:#000;"><span class="r" style="width:21.00px"><span style="transform:scaleX(1.0484)">bin</span></span></span>
<svg style="left:25.5px;top:604px;" width="16" height="16"><use href="#tw_closed"/></svg>
<svg style="left:46px;top:603px;" width="16" height="16"><use href="#folder"/></svg>
<span class="t" style="left:67px;top:602.00px;font-size:15px;color:#000;"><span class="r" style="width:42.00px"><span style="transform:scaleX(1.0071)">gradle</span></span></span>
<svg style="left:25.5px;top:627px;" width="16" height="16"><use href="#tw_closed"/></svg>
<svg style="left:46px;top:626px;" width="16" height="16"><use href="#folder"/></svg>
<span class="t" style="left:67px;top:625.00px;font-size:15px;color:#000;"><span class="r" style="width:21.00px"><span style="transform:scaleX(0.9683)">run</span></span></span>
<svg style="left:25.5px;top:650px;" width="16" height="16"><use href="#tw_closed"/></svg>
<svg style="left:46px;top:649px;" width="16" height="16"><use href="#folder_e"/></svg>
<span class="t" style="left:67px;top:648.00px;font-size:15px;color:#000;"><span class="r" style="width:18.00px"><span style="transform:scaleX(0.9000)">src</span></span></span>
<svg style="left:46px;top:672px;" width="16" height="16"><use href="#file"/></svg>
<span class="t" style="left:67px;top:671.00px;font-size:15px;color:#000;"><span class="r" style="width:59.00px"><span style="transform:scaleX(1.0402)">build.bat</span></span></span>
<svg style="left:46px;top:695px;" width="16" height="16"><use href="#gradle"/></svg>
<span class="t" style="left:67px;top:694.00px;font-size:15px;color:#000;"><span class="r" style="width:80.00px"><span style="transform:scaleX(1.0314)">build.gradle</span></span></span>
<svg style="left:46px;top:718px;" width="16" height="16"><use href="#file"/></svg>
<span class="t" style="left:67px;top:717.00px;font-size:15px;color:#000;"><span class="r" style="width:90.00px"><span style="transform:scaleX(1.0086)">changelog.txt</span></span></span>
<svg style="left:46px;top:741px;" width="16" height="16"><use href="#file"/></svg>
<span class="t" style="left:67px;top:740.00px;font-size:15px;color:#000;"><span class="r" style="width:77.00px"><span style="transform:scaleX(0.8970)">CREDITS.txt</span></span></span>
<svg style="left:46px;top:764px;" width="16" height="16"><use href="#file"/></svg>
<span class="t" style="left:67px;top:763.00px;font-size:15px;color:#000;"><span class="r" style="width:114.00px"><span style="transform:scaleX(1.0126)">gradle.properties</span></span></span>
<svg style="left:46px;top:787px;" width="16" height="16"><use href="#file"/></svg>
<span class="t" style="left:67px;top:786.00px;font-size:15px;color:#000;"><span class="r" style="width:54.00px"><span style="transform:scaleX(1.0280)">gradlew</span></span></span>
<svg style="left:46px;top:810px;" width="16" height="16"><use href="#file"/></svg>
<span class="t" style="left:67px;top:809.00px;font-size:15px;color:#000;"><span class="r" style="width:79.00px"><span style="transform:scaleX(1.0295)">gradlew.bat</span></span></span>
<svg style="left:46px;top:833px;" width="16" height="16"><use href="#file"/></svg>
<span class="t" style="left:67px;top:832.00px;font-size:15px;color:#000;"><span class="r" style="width:75.00px"><span style="transform:scaleX(0.8907)">LICENSE.txt</span></span></span>
<svg style="left:46px;top:856px;" width="16" height="16"><use href="#file"/></svg>
<span class="t" style="left:67px;top:855.00px;font-size:15px;color:#000;"><span class="r" style="width:79.00px"><span style="transform:scaleX(0.9384)">README.txt</span></span></span>
<svg style="left:46px;top:879px;" width="16" height="16"><use href="#file"/></svg>
<span class="t" style="left:67px;top:878.00px;font-size:15px;color:#000;"><span class="r" style="width:105.00px"><span style="transform:scaleX(0.9686)">runClient.launch</span></span></span>
<svg style="left:46px;top:902px;" width="16" height="16"><use href="#file"/></svg>
<span class="t" style="left:67px;top:901.00px;font-size:15px;color:#000;"><span class="r" style="width:99.00px"><span style="transform:scaleX(0.9731)">runData.launch</span></span></span>
<svg style="left:46px;top:925px;" width="16" height="16"><use href="#file"/></svg>
<span class="t" style="left:67px;top:924.00px;font-size:15px;color:#000;"><span class="r" style="width:108.00px"><span style="transform:scaleX(0.9523)">runServer.launch</span></span></span>
</div>
<div style="left:510px;top:82px;width:1376px;height:972px;background:#fff;border:1px solid #c2c3c8;border-radius:7px 7px 6px 6px;box-sizing:border-box;overflow:hidden"></div>
<div style="left:511px;top:83px;width:1374px;height:28px;background:linear-gradient(#d2e0f0,#cdddec);border-radius:6px 6px 0 0"></div>
<div style="left:511px;top:111px;width:1374px;height:1px;background:#b4bdd2;"></div>
<div style="left:1330.5px;top:82.5px;width:211px;height:29.5px;background:#fff;border-radius:7px 7px 0 0;border:1px solid #c3c8d4;border-bottom:none;box-sizing:border-box"></div>
<span class="t" style="left:514.5px;top:87.76px;font-size:16px;color:#000;font-weight:bold;">{</span>
<span class="t" style="left:525.5px;top:87.76px;font-size:16px;color:#000;font-weight:bold;">}</span>
<span class="t" style="left:535px;top:89.00px;font-size:15px;color:#000;"><span class="r" style="width:93.70px"><span style="transform:scaleX(0.9945)">buronium.json</span></span></span>
<span class="t" style="left:658.5px;top:87.76px;font-size:16px;color:#000;font-weight:bold;">{</span>
<span class="t" style="left:669.5px;top:87.76px;font-size:16px;color:#000;font-weight:bold;">}</span>
<span class="t" style="left:679px;top:89.00px;font-size:15px;color:#000;"><span class="r" style="width:120.30px"><span style="transform:scaleX(0.9368)">machine_case.json</span></span></span>
<span class="t" style="left:829.5px;top:87.76px;font-size:16px;color:#000;font-weight:bold;">{</span>
<span class="t" style="left:840.5px;top:87.76px;font-size:16px;color:#000;font-weight:bold;">}</span>
<span class="t" style="left:850px;top:89.00px;font-size:15px;color:#000;"><span class="r" style="width:120.30px"><span style="transform:scaleX(0.9368)">machine_case.json</span></span></span>
<svg style="left:1001px;top:90px;" width="15" height="15"><use href="#gradle"/></svg>
<span class="t" style="left:1021px;top:89.00px;font-size:15px;color:#000;"><span class="r" style="width:79.00px"><span style="transform:scaleX(1.0185)">build.gradle</span></span></span>
<svg style="left:1129.8px;top:90.3px;" width="16" height="16"><use href="#java_e"/></svg>
<span class="t" style="left:1149.5px;top:89.00px;font-size:15px;color:#000;"><span class="r" style="width:153.50px"><span style="transform:scaleX(0.9794)">ItemStoneHammer.java</span></span></span>
<svg style="left:1334px;top:90.3px;" width="16" height="16"><use href="#java_e"/></svg>
<span class="t" style="left:1354px;top:89.00px;font-size:15px;color:#000;"><span class="r" style="width:160.30px"><span style="transform:scaleX(0.9712)">BDCArmorMaterials.java</span></span></span>
<svg style="left:1522.5px;top:92.8px;" width="11" height="11" viewBox="0 0 11 11"><path d="M1 1l3.2 0 1.3 2.2L6.8 1 10 1 10 3.6 7.800 5.500 10 7.400 10 10 6.800 10 5.500 7.800 4.200 10 1 10 1 7.400 3.200 5.500 1 3.600z" fill="#fff" stroke="#484848" stroke-width=".900"/></svg>
<svg style="left:1545px;top:90.3px;" width="16" height="16"><use href="#java_e"/></svg>
<span class="t" style="left:1564.5px;top:89.00px;font-size:15px;color:#000;"><span class="r" style="width:156.20px"><span style="transform:scaleX(0.9624)">*ItemWoodScissors.java</span></span></span>
<div style="left:1838px;top:90px;width:10px;height:4px;background:#fff;border:1px solid #555;box-sizing:border-box"></div>
<svg style="left:1861px;top:90px;" width="11" height="10" viewBox="0 0 11 10"><rect x=".5" y=".5" width="9.500" height="8.500" fill="#fff" stroke="#555"/><path d="M.5 2h9.500" stroke="#555" stroke-width="1.200"/></svg>
<div style="left:1196px;top:113px;width:4px;height:938px;background:#c8d7ec;"></div>
<style>.selA{color:#fff}</style>
<div style="left:513px;top:114px;width:12px;height:917px;background:#f8f8f8;"></div>
<div style="left:550px;top:114px;width:1px;height:917px;background:#f8f8f8;"></div>
<svg style="left:513px;top:174px" width="12" height="150"><defs><pattern id="d513" width="2" height="2" patternUnits="userSpaceOnUse"><rect width="2" height="2" fill="#d8ecfb"/><rect width="1" height="1" fill="#2a86d4"/><rect x="1" y="1" width="1" height="1" fill="#2a86d4"/></pattern></defs><rect width="12" height="100%" fill="url(#d513)"/><rect width="12" height="1" fill="#2a86d4"/><rect y="149" width="12" height="1" fill="#2a86d4"/></svg>
<svg style="left:513px;top:173.3px" width="13" height="15" viewBox="0 0 13 15"><use href="#qfix" width="16" height="16"/></svg>
<svg style="left:513px;top:233.3px" width="13" height="15" viewBox="0 0 13 15"><use href="#qfix" width="16" height="16"/></svg>
<svg style="left:513px;top:248.3px" width="13" height="15" viewBox="0 0 13 15"><use href="#qfix" width="16" height="16"/></svg>
<svg style="left:513px;top:263.3px" width="13" height="15" viewBox="0 0 13 15"><use href="#qfix" width="16" height="16"/></svg>
<svg style="left:513px;top:278.3px" width="13" height="15" viewBox="0 0 13 15"><use href="#qfix" width="16" height="16"/></svg>
<div style="left:553px;top:174px;width:609px;height:15px;background:#e8f2fe;"></div>
<div style="left:659px;top:174px;width:136px;height:15px;background:#0078d7;"></div>
<div class="ln" style="left:516px;top:114.7px;width:24.5px">1</div>
<div class="code" style="left:553px;top:114.6px"><b class="k">package</b> meta<i class="p">.</i>burodustinrialcraft<i class="p">.</i>init;<i class="nl">↵</i></div>
<div class="ln" style="left:516px;top:129.7px;width:24.5px">2</div>
<div class="code" style="left:553px;top:129.6px"><i class="nl">↵</i></div>
<div class="ln" style="left:516px;top:144.7px;width:24.5px">3</div>
<div class="code" style="left:553px;top:144.6px"><b class="k">import</b> meta<i class="p">.</i>burodustinrialcraft<i class="p">.</i>item<i class="p">.</i>ItemWoodCardon;<i class="fold"><i class="p">.</i><i class="p">.</i></i></div>
<div class="ln" style="left:516px;top:159.7px;width:24.5px">8</div>
<div class="code" style="left:553px;top:159.6px"><i class="nl">↵</i></div>
<div class="ln" style="left:516px;top:174.7px;width:24.5px">9</div>
<div class="code" style="left:553px;top:174.6px"><b class="k">public</b> <b class="k">enum</b> <span class="er selA">BDCArmorMaterials</span> <b class="k">implements</b> IArmorMaterial{<i class="nl">↵</i></div>
<div class="ln" style="left:516px;top:189.7px;width:24.5px">10</div>
<div class="code" style="left:553px;top:189.6px"><span class="ws">^   </span><b class="f">WoodCarbon</b>(<span class="s">"bdc;wood_carbon"</span><i class="p">,</i><i class="nl">↵</i></div>
<div class="ln" style="left:516px;top:204.7px;width:24.5px">11</div>
<div class="code" style="left:553px;top:204.6px"><span class="ws">^   ^   ^   </span>13<i class="p">,</i><i class="nl">↵</i></div>
<div class="ln" style="left:516px;top:219.7px;width:24.5px">12</div>
<div class="code" style="left:553px;top:219.6px"><span class="ws">^   ^   ^   </span><b class="k">new</b> <b class="k">int</b>[]{1<i class="p">,</i>4<i class="p">,</i>5<i class="p">,</i>2}<i class="p">,</i><i class="nl">↵</i></div>
<div class="ln" style="left:516px;top:234.7px;width:24.5px">13</div>
<div class="code" style="left:553px;top:234.6px"><span class="ws">^   ^   ^   </span>ArmorMaterial<i class="p">.</i><b class="f">LEATHER</b><i class="p">.</i><span class="er">getEnchatbility</span>()<i class="p">,</i><i class="nl">↵</i></div>
<div class="ln" style="left:516px;top:249.7px;width:24.5px">14</div>
<div class="code" style="left:553px;top:249.6px"><span class="ws">^   ^   ^   </span>SoundEvents<i class="p">.</i><span class="er">ITEM_EQUIP_LEATHER</span><i class="p">,</i><i class="nl">↵</i></div>
<div class="ln" style="left:516px;top:264.7px;width:24.5px">15</div>
<div class="code" style="left:553px;top:264.6px"><span class="ws">^   ^   ^   </span><span class="er">AromrMaterial</span><i class="p">.</i>CHAIN<i class="p">.</i>getTouughness()<i class="p">,</i><i class="nl">↵</i></div>
<div class="ln" style="left:516px;top:279.7px;width:24.5px">16</div>
<div class="code" style="left:553px;top:279.6px"><span class="ws">^   ^   ^   </span>Ingredient<i class="p">.</i><b>fromItems</b>(<b class="k">new</b> ItemWoodCardon()<i class="p">.</i><span class="er">asItem</span>()))<i class="nl">↵</i></div>
<div class="ln" style="left:516px;top:294.7px;width:24.5px">17</div>
<div class="code" style="left:553px;top:294.6px"><i class="nl">↵</i></div>
<div class="ln" style="left:516px;top:309.7px;width:24.5px">18</div>
<div class="code" style="left:553px;top:309.6px">}<i class="nl">↵</i></div>
<div class="ln" style="left:516px;top:324.7px;width:24.5px">19</div>
<div class="code" style="left:553px;top:324.6px"></div>
<svg style="left:659px;top:186.3px;" width="136" height="3" viewBox="0 0 136 3"><path d="M0 2.5L2 0.5L4 2.5L6 0.5L8 2.5L10 0.5L12 2.5L14 0.5L16 2.5L18 0.5L20 2.5L22 0.5L24 2.5L26 0.5L28 2.5L30 0.5L32 2.5L34 0.5L36 2.5L38 0.5L40 2.5L42 0.5L44 2.5L46 0.5L48 2.5L50 0.5L52 2.5L54 0.5L56 2.5L58 0.5L60 2.5L62 0.5L64 2.5L66 0.5L68 2.5L70 0.5L72 2.5L74 0.5L76 2.5L78 0.5L80 2.5L82 0.5L84 2.5L86 0.5L88 2.5L90 0.5L92 2.5L94 0.5L96 2.5L98 0.5L100 2.5L102 0.5L104 2.5L106 0.5L108 2.5L110 0.5L112 2.5L114 0.5L116 2.5L118 0.5L120 2.5L122 0.5L124 2.5L126 0.5L128 2.5L130 0.5L132 2.5L134 0.5L136 2.5" fill="none" stroke="#fa0a6e" stroke-width="1.150"/></svg>
<svg style="left:832px;top:246.3px;" width="120" height="3" viewBox="0 0 120 3"><path d="M0 2.5L2 0.5L4 2.5L6 0.5L8 2.5L10 0.5L12 2.5L14 0.5L16 2.5L18 0.5L20 2.5L22 0.5L24 2.5L26 0.5L28 2.5L30 0.5L32 2.5L34 0.5L36 2.5L38 0.5L40 2.5L42 0.5L44 2.5L46 0.5L48 2.5L50 0.5L52 2.5L54 0.5L56 2.5L58 0.5L60 2.5L62 0.5L64 2.5L66 0.5L68 2.5L70 0.5L72 2.5L74 0.5L76 2.5L78 0.5L80 2.5L82 0.5L84 2.5L86 0.5L88 2.5L90 0.5L92 2.5L94 0.5L96 2.5L98 0.5L100 2.5L102 0.5L104 2.5L106 0.5L108 2.5L110 0.5L112 2.5L114 0.5L116 2.5L118 0.5L120 2.5" fill="none" stroke="#fa0a6e" stroke-width="1.150"/></svg>
<svg style="left:745px;top:261.3px;" width="144" height="3" viewBox="0 0 144 3"><path d="M0 2.5L2 0.5L4 2.5L6 0.5L8 2.5L10 0.5L12 2.5L14 0.5L16 2.5L18 0.5L20 2.5L22 0.5L24 2.5L26 0.5L28 2.5L30 0.5L32 2.5L34 0.5L36 2.5L38 0.5L40 2.5L42 0.5L44 2.5L46 0.5L48 2.5L50 0.5L52 2.5L54 0.5L56 2.5L58 0.5L60 2.5L62 0.5L64 2.5L66 0.5L68 2.5L70 0.5L72 2.5L74 0.5L76 2.5L78 0.5L80 2.5L82 0.5L84 2.5L86 0.5L88 2.5L90 0.5L92 2.5L94 0.5L96 2.5L98 0.5L100 2.5L102 0.5L104 2.5L106 0.5L108 2.5L110 0.5L112 2.5L114 0.5L116 2.5L118 0.5L120 2.5L122 0.5L124 2.5L126 0.5L128 2.5L130 0.5L132 2.5L134 0.5L136 2.5L138 0.5L140 2.5L142 0.5L144 2.5" fill="none" stroke="#fa0a6e" stroke-width="1.150"/></svg>
<svg style="left:649px;top:276.3px;" width="104" height="3" viewBox="0 0 104 3"><path d="M0 2.5L2 0.5L4 2.5L6 0.5L8 2.5L10 0.5L12 2.5L14 0.5L16 2.5L18 0.5L20 2.5L22 0.5L24 2.5L26 0.5L28 2.5L30 0.5L32 2.5L34 0.5L36 2.5L38 0.5L40 2.5L42 0.5L44 2.5L46 0.5L48 2.5L50 0.5L52 2.5L54 0.5L56 2.5L58 0.5L60 2.5L62 0.5L64 2.5L66 0.5L68 2.5L70 0.5L72 2.5L74 0.5L76 2.5L78 0.5L80 2.5L82 0.5L84 2.5L86 0.5L88 2.5L90 0.5L92 2.5L94 0.5L96 2.5L98 0.5L100 2.5L102 0.5L104 2.5" fill="none" stroke="#fa0a6e" stroke-width="1.150"/></svg>
<svg style="left:997px;top:291.3px;" width="48" height="3" viewBox="0 0 48 3"><path d="M0 2.5L2 0.5L4 2.5L6 0.5L8 2.5L10 0.5L12 2.5L14 0.5L16 2.5L18 0.5L20 2.5L22 0.5L24 2.5L26 0.5L28 2.5L30 0.5L32 2.5L34 0.5L36 2.5L38 0.5L40 2.5L42 0.5L44 2.5L46 0.5L48 2.5" fill="none" stroke="#fa0a6e" stroke-width="1.150"/></svg>
<svg style="left:540.5px;top:146.5px;" width="10" height="10" viewBox="0 0 10 10"><circle cx="5" cy="5" r="4.400" fill="#e3edf8" stroke="#a8bcd4"/><path d="M2.300 5h5.400" stroke="#1c2a44" stroke-width="1.200"/><path d="M5 2.300v5.400" stroke="#1c2a44" stroke-width="1.200"/></svg>
<svg style="left:540.5px;top:191.5px;" width="10" height="10" viewBox="0 0 10 10"><circle cx="5" cy="5" r="4.400" fill="#e3edf8" stroke="#a8bcd4"/><path d="M2.300 5h5.400" stroke="#7f8c9f" stroke-width="1.200"/></svg>
<div style="left:1163px;top:114px;width:20px;height:917px;background:#f0f0f0;"></div>
<svg style="left:1166px;top:119px;" width="14" height="10" viewBox="0 0 14 10"><path d="M2 8l5-5 5 5" fill="none" stroke="#bfbfbf" stroke-width="1.800"/></svg>
<svg style="left:1166px;top:1015px;" width="14" height="10" viewBox="0 0 14 10"><path d="M2 2l5 5 5-5" fill="none" stroke="#bfbfbf" stroke-width="1.800"/></svg>
<div style="left:1183px;top:114px;width:13px;height:937px;background:#f9f9f9;"></div>
<div style="left:513px;top:1031px;width:670px;height:20px;background:#fafafa;"></div>
<div style="left:551px;top:1031px;width:632px;height:20px;background:#f0f0f0;"></div>
<svg style="left:557px;top:1034px;" width="10" height="14" viewBox="0 0 10 14"><path d="M8 2l-5 5 5 5" fill="none" stroke="#bfbfbf" stroke-width="1.800"/></svg>
<svg style="left:1145px;top:1034px;" width="10" height="14" viewBox="0 0 10 14"><path d="M2 2l5 5-5 5" fill="none" stroke="#bfbfbf" stroke-width="1.800"/></svg>
<div style="left:1185px;top:118px;width:8px;height:8px;background:#ff0080;border:1px solid #b58a9a;box-sizing:border-box"></div>
<div style="left:1185px;top:179px;width:9px;height:5px;background:#f3b6d8;border:1px solid #ff3c9d;box-sizing:border-box"></div>
<div style="left:1185px;top:239px;width:9px;height:5px;background:#f3b6d8;border:1px solid #ff3c9d;box-sizing:border-box"></div>
<div style="left:1185px;top:254px;width:9px;height:5px;background:#f3b6d8;border:1px solid #ff3c9d;box-sizing:border-box"></div>
<div style="left:1185px;top:269px;width:9px;height:5px;background:#f3b6d8;border:1px solid #ff3c9d;box-sizing:border-box"></div>
<div style="left:1185px;top:284px;width:9px;height:5px;background:#f3b6d8;border:1px solid #ff3c9d;box-sizing:border-box"></div>
<div style="left:1200px;top:114px;width:12px;height:917px;background:#f8f8f8;"></div>
<div style="left:1237px;top:114px;width:1px;height:917px;background:#f8f8f8;"></div>
<svg style="left:1200px;top:189px" width="12" height="105"><defs><pattern id="d1200" width="2" height="2" patternUnits="userSpaceOnUse"><rect width="2" height="2" fill="#d8ecfb"/><rect width="1" height="1" fill="#2a86d4"/><rect x="1" y="1" width="1" height="1" fill="#2a86d4"/></pattern></defs><rect width="12" height="100%" fill="url(#d1200)"/><rect width="12" height="1" fill="#2a86d4"/><rect y="104" width="12" height="1" fill="#2a86d4"/></svg>
<svg style="left:1200px;top:173.3px" width="13" height="15" viewBox="0 0 13 15"><use href="#qfix" width="16" height="16"/></svg>
<svg style="left:1200px;top:233.3px" width="13" height="15" viewBox="0 0 13 15"><use href="#qfix" width="16" height="16"/></svg>
<svg style="left:1200px;top:248.3px" width="13" height="15" viewBox="0 0 13 15"><use href="#qfix" width="16" height="16"/></svg>
<svg style="left:1200px;top:263.3px" width="13" height="15" viewBox="0 0 13 15"><use href="#qfix" width="16" height="16"/></svg>
<svg style="left:1200px;top:278.3px" width="13" height="15" viewBox="0 0 13 15"><use href="#qfix" width="16" height="16"/></svg>
<div style="left:1240px;top:204px;width:609px;height:15px;background:#e8f2fe;"></div>
<div style="left:1346px;top:174px;width:136px;height:15px;background:#00f2f2;"></div>
<div class="ln" style="left:1203px;top:114.7px;width:24.5px">1</div>
<div class="code" style="left:1240px;top:114.6px"><b class="k">package</b> meta<i class="p">.</i>burodustinrialcraft<i class="p">.</i>init;<i class="nl">↵</i></div>
<div class="ln" style="left:1203px;top:129.7px;width:24.5px">2</div>
<div class="code" style="left:1240px;top:129.6px"><i class="nl">↵</i></div>
<div class="ln" style="left:1203px;top:144.7px;width:24.5px">3</div>
<div class="code" style="left:1240px;top:144.6px"><b class="k">import</b> meta<i class="p">.</i>burodustinrialcraft<i class="p">.</i>item<i class="p">.</i>ItemWoodCardon;<i class="fold"><i class="p">.</i><i class="p">.</i></i></div>
<div class="ln" style="left:1203px;top:159.7px;width:24.5px">8</div>
<div class="code" style="left:1240px;top:159.6px"><i class="nl">↵</i></div>
<div class="ln" style="left:1203px;top:174.7px;width:24.5px">9</div>
<div class="code" style="left:1240px;top:174.6px"><b class="k">public</b> <b class="k">enum</b> <span class="er selB">BDCArmorMaterials</span> <b class="k">implements</b> IArmorMaterial{<i class="nl">↵</i></div>
<div class="ln" style="left:1203px;top:189.7px;width:24.5px">10</div>
<div class="code" style="left:1240px;top:189.6px"><span class="ws">^   </span><b class="f">WoodCarbon</b>(<span class="s">"bdc;wood_carbon"</span><i class="p">,</i><i class="nl">↵</i></div>
<div class="ln" style="left:1203px;top:204.7px;width:24.5px">11</div>
<div class="code" style="left:1240px;top:204.6px"><span class="ws">^   ^   ^   </span>13<i class="p">,</i><i class="nl">↵</i></div>
<div class="ln" style="left:1203px;top:219.7px;width:24.5px">12</div>
<div class="code" style="left:1240px;top:219.6px"><span class="ws">^   ^   ^   </span><b class="k">new</b> <b class="k">int</b>[]{1<i class="p">,</i>4<i class="p">,</i>5<i class="p">,</i>2}<i class="p">,</i><i class="nl">↵</i></div>
<div class="ln" style="left:1203px;top:234.7px;width:24.5px">13</div>
<div class="code" style="left:1240px;top:234.6px"><span class="ws">^   ^   ^   </span>ArmorMaterial<i class="p">.</i><b class="f">LEATHER</b><i class="p">.</i><span class="er">getEnchatbility</span>()<i class="p">,</i><i class="nl">↵</i></div>
<div class="ln" style="left:1203px;top:249.7px;width:24.5px">14</div>
<div class="code" style="left:1240px;top:249.6px"><span class="ws">^   ^   ^   </span>SoundEvents<i class="p">.</i><span class="er">ITEM_EQUIP_LEATHER</span><i class="p">,</i><i class="nl">↵</i></div>
<div class="ln" style="left:1203px;top:264.7px;width:24.5px">15</div>
<div class="code" style="left:1240px;top:264.6px"><span class="ws">^   ^   ^   </span><span class="er">AromrMaterial</span><i class="p">.</i>CHAIN<i class="p">.</i>getTouughness()<i class="p">,</i><i class="nl">↵</i></div>
<div class="ln" style="left:1203px;top:279.7px;width:24.5px">16</div>
<div class="code" style="left:1240px;top:279.6px"><span class="ws">^   ^   ^   </span>Ingredient<i class="p">.</i><b>fromItems</b>(<b class="k">new</b> ItemWoodCardon()<i class="p">.</i><span class="er">asItem</span>()))<i class="nl">↵</i></div>
<div class="ln" style="left:1203px;top:294.7px;width:24.5px">17</div>
<div class="code" style="left:1240px;top:294.6px"><i class="nl">↵</i></div>
<div class="ln" style="left:1203px;top:309.7px;width:24.5px">18</div>
<div class="code" style="left:1240px;top:309.6px">}<i class="nl">↵</i></div>
<div class="ln" style="left:1203px;top:324.7px;width:24.5px">19</div>
<div class="code" style="left:1240px;top:324.6px"></div>
<svg style="left:1346px;top:186.3px;" width="136" height="3" viewBox="0 0 136 3"><path d="M0 2.5L2 0.5L4 2.5L6 0.5L8 2.5L10 0.5L12 2.5L14 0.5L16 2.5L18 0.5L20 2.5L22 0.5L24 2.5L26 0.5L28 2.5L30 0.5L32 2.5L34 0.5L36 2.5L38 0.5L40 2.5L42 0.5L44 2.5L46 0.5L48 2.5L50 0.5L52 2.5L54 0.5L56 2.5L58 0.5L60 2.5L62 0.5L64 2.5L66 0.5L68 2.5L70 0.5L72 2.5L74 0.5L76 2.5L78 0.5L80 2.5L82 0.5L84 2.5L86 0.5L88 2.5L90 0.5L92 2.5L94 0.5L96 2.5L98 0.5L100 2.5L102 0.5L104 2.5L106 0.5L108 2.5L110 0.5L112 2.5L114 0.5L116 2.5L118 0.5L120 2.5L122 0.5L124 2.5L126 0.5L128 2.5L130 0.5L132 2.5L134 0.5L136 2.5" fill="none" stroke="#fa0a6e" stroke-width="1.150"/></svg>
<svg style="left:1519px;top:246.3px;" width="120" height="3" viewBox="0 0 120 3"><path d="M0 2.5L2 0.5L4 2.5L6 0.5L8 2.5L10 0.5L12 2.5L14 0.5L16 2.5L18 0.5L20 2.5L22 0.5L24 2.5L26 0.5L28 2.5L30 0.5L32 2.5L34 0.5L36 2.5L38 0.5L40 2.5L42 0.5L44 2.5L46 0.5L48 2.5L50 0.5L52 2.5L54 0.5L56 2.5L58 0.5L60 2.5L62 0.5L64 2.5L66 0.5L68 2.5L70 0.5L72 2.5L74 0.5L76 2.5L78 0.5L80 2.5L82 0.5L84 2.5L86 0.5L88 2.5L90 0.5L92 2.5L94 0.5L96 2.5L98 0.5L100 2.5L102 0.5L104 2.5L106 0.5L108 2.5L110 0.5L112 2.5L114 0.5L116 2.5L118 0.5L120 2.5" fill="none" stroke="#fa0a6e" stroke-width="1.150"/></svg>
<svg style="left:1432px;top:261.3px;" width="144" height="3" viewBox="0 0 144 3"><path d="M0 2.5L2 0.5L4 2.5L6 0.5L8 2.5L10 0.5L12 2.5L14 0.5L16 2.5L18 0.5L20 2.5L22 0.5L24 2.5L26 0.5L28 2.5L30 0.5L32 2.5L34 0.5L36 2.5L38 0.5L40 2.5L42 0.5L44 2.5L46 0.5L48 2.5L50 0.5L52 2.5L54 0.5L56 2.5L58 0.5L60 2.5L62 0.5L64 2.5L66 0.5L68 2.5L70 0.5L72 2.5L74 0.5L76 2.5L78 0.5L80 2.5L82 0.5L84 2.5L86 0.5L88 2.5L90 0.5L92 2.5L94 0.5L96 2.5L98 0.5L100 2.5L102 0.5L104 2.5L106 0.5L108 2.5L110 0.5L112 2.5L114 0.5L116 2.5L118 0.5L120 2.5L122 0.5L124 2.5L126 0.5L128 2.5L130 0.5L132 2.5L134 0.5L136 2.5L138 0.5L140 2.5L142 0.5L144 2.5" fill="none" stroke="#fa0a6e" stroke-width="1.150"/></svg>
<svg style="left:1336px;top:276.3px;" width="104" height="3" viewBox="0 0 104 3"><path d="M0 2.5L2 0.5L4 2.5L6 0.5L8 2.5L10 0.5L12 2.5L14 0.5L16 2.5L18 0.5L20 2.5L22 0.5L24 2.5L26 0.5L28 2.5L30 0.5L32 2.5L34 0.5L36 2.5L38 0.5L40 2.5L42 0.5L44 2.5L46 0.5L48 2.5L50 0.5L52 2.5L54 0.5L56 2.5L58 0.5L60 2.5L62 0.5L64 2.5L66 0.5L68 2.5L70 0.5L72 2.5L74 0.5L76 2.5L78 0.5L80 2.5L82 0.5L84 2.5L86 0.5L88 2.5L90 0.5L92 2.5L94 0.5L96 2.5L98 0.5L100 2.5L102 0.5L104 2.5" fill="none" stroke="#fa0a6e" stroke-width="1.150"/></svg>
<svg style="left:1684px;top:291.3px;" width="48" height="3" viewBox="0 0 48 3"><path d="M0 2.5L2 0.5L4 2.5L6 0.5L8 2.5L10 0.5L12 2.5L14 0.5L16 2.5L18 0.5L20 2.5L22 0.5L24 2.5L26 0.5L28 2.5L30 0.5L32 2.5L34 0.5L36 2.5L38 0.5L40 2.5L42 0.5L44 2.5L46 0.5L48 2.5" fill="none" stroke="#fa0a6e" stroke-width="1.150"/></svg>
<svg style="left:1227.5px;top:146.5px;" width="10" height="10" viewBox="0 0 10 10"><circle cx="5" cy="5" r="4.400" fill="#e3edf8" stroke="#a8bcd4"/><path d="M2.300 5h5.400" stroke="#1c2a44" stroke-width="1.200"/><path d="M5 2.300v5.400" stroke="#1c2a44" stroke-width="1.200"/></svg>
<svg style="left:1227.5px;top:191.5px;" width="10" height="10" viewBox="0 0 10 10"><circle cx="5" cy="5" r="4.400" fill="#e3edf8" stroke="#a8bcd4"/><path d="M2.300 5h5.400" stroke="#7f8c9f" stroke-width="1.200"/></svg>
<div style="left:1850px;top:114px;width:20px;height:917px;background:#f0f0f0;"></div>
<svg style="left:1853px;top:119px;" width="14" height="10" viewBox="0 0 14 10"><path d="M2 8l5-5 5 5" fill="none" stroke="#bfbfbf" stroke-width="1.800"/></svg>
<svg style="left:1853px;top:1015px;" width="14" height="10" viewBox="0 0 14 10"><path d="M2 2l5 5 5-5" fill="none" stroke="#bfbfbf" stroke-width="1.800"/></svg>
<div style="left:1870px;top:114px;width:13px;height:937px;background:#f9f9f9;"></div>
<div style="left:1200px;top:1031px;width:670px;height:20px;background:#fafafa;"></div>
<div style="left:1238px;top:1031px;width:632px;height:20px;background:#f0f0f0;"></div>
<svg style="left:1244px;top:1034px;" width="10" height="14" viewBox="0 0 10 14"><path d="M8 2l-5 5 5 5" fill="none" stroke="#bfbfbf" stroke-width="1.800"/></svg>
<svg style="left:1832px;top:1034px;" width="10" height="14" viewBox="0 0 10 14"><path d="M2 2l5 5-5 5" fill="none" stroke="#bfbfbf" stroke-width="1.800"/></svg>
<div style="left:1872px;top:118px;width:8px;height:8px;background:#ff0080;border:1px solid #b58a9a;box-sizing:border-box"></div>
<div style="left:1872px;top:179px;width:9px;height:5px;background:#f3b6d8;border:1px solid #ff3c9d;box-sizing:border-box"></div>
<div style="left:1872px;top:239px;width:9px;height:5px;background:#f3b6d8;border:1px solid #ff3c9d;box-sizing:border-box"></div>
<div style="left:1872px;top:254px;width:9px;height:5px;background:#f3b6d8;border:1px solid #ff3c9d;box-sizing:border-box"></div>
<div style="left:1872px;top:269px;width:9px;height:5px;background:#f3b6d8;border:1px solid #ff3c9d;box-sizing:border-box"></div>
<div style="left:1872px;top:284px;width:9px;height:5px;background:#f3b6d8;border:1px solid #ff3c9d;box-sizing:border-box"></div>
<div style="left:795px;top:174px;width:2px;height:15px;background:#000;"></div>
<div style="left:1887.5px;top:82.5px;width:32px;height:79.5px;background:none;border:1.500px solid #f9fafe;border-radius:5px;box-sizing:border-box"></div>
<div style="left:1895px;top:89px;width:2px;height:2px;background:#9a948a;"></div>
<div style="left:1899px;top:89px;width:2px;height:2px;background:#9a948a;"></div>
<div style="left:1903px;top:89px;width:2px;height:2px;background:#9a948a;"></div>
<div style="left:1907px;top:89px;width:2px;height:2px;background:#9a948a;"></div>
<svg style="left:1898.5px;top:98.5px;" width="9" height="9" viewBox="0 0 9 9"><path d="M3 1h5v3.500h-5zM1 4h5v3.500h-5z" fill="#e1e6f6" stroke="#5a5148" stroke-width="1.200"/></svg>
<svg style="left:1896px;top:117px;" width="15" height="15" viewBox="0 0 15 15"><circle cx="7.500" cy="7.500" r="7" fill="#2f8a2f"/><circle cx="7.500" cy="7.500" r="5.600" fill="#43a343"/><path d="M5.500 3.800l5.500 3.700-5.500 3.700z" fill="#fff"/></svg>
<svg style="left:1896px;top:140px;" width="15" height="16" viewBox="0 0 15 16"><rect x="1" y="1.500" width="4.500" height="4.500" fill="#fff" stroke="#2f62b5" stroke-width="1.2"/><rect x="1" y="10" width="4.500" height="4.500" fill="#fff" stroke="#2f62b5" stroke-width="1.200"/><path d="M7.500 2.500h6M7.500 5.500h4M7.500 11h6M7.500 14h4" stroke="#2f62b5" stroke-width="1.200"/><rect x="8" y="7" width="2.500" height="2.500" fill="none" stroke="#2f62b5" stroke-width=".9"/></svg>
<span class="t" style="left:3.5px;top:1055.90px;font-size:15px;color:#000;"><span class="r" style="width:13.00px"><span style="transform:scaleX(0.8658)">型</span></span></span>
<span class="t" style="left:21.8px;top:1055.90px;font-size:15px;color:#000;"><span class="r" style="width:132.50px"><span style="transform:scaleX(0.9936)">BDCArmorMaterials</span></span></span>
<span class="t" style="left:158.5px;top:1055.90px;font-size:15px;color:#000;"><span class="r" style="width:150.50px"><span style="transform:scaleX(0.8360)">は継承された抽象メソッド</span></span></span>
<span class="t" style="left:313.3px;top:1055.90px;font-size:15px;color:#000;"><span class="r" style="width:152.00px"><span style="transform:scaleX(0.9856)">...orMaterial.getName()</span></span></span>
<span class="t" style="left:470.5px;top:1055.90px;font-size:15px;color:#000;"><span class="r" style="width:151.20px"><span style="transform:scaleX(0.8399)">を実装する必要があります</span></span></span>
<div style="left:634px;top:1057px;width:1px;height:21px;background:#a8acb8;"></div>
<div style="left:809px;top:1057px;width:1px;height:21px;background:#a8acb8;"></div>
<div style="left:975px;top:1057px;width:1px;height:21px;background:#a8acb8;"></div>
<span class="t" style="left:643.5px;top:1055.90px;font-size:15px;color:#000;"><span class="r" style="width:82.50px"><span style="transform:scaleX(0.9165)">書き込み可能</span></span></span>
<span class="t" style="left:817px;top:1055.90px;font-size:15px;color:#000;"><span class="r" style="width:71.50px"><span style="transform:scaleX(0.7983)">スマート挿入</span></span></span>
<span class="t" style="left:983.5px;top:1055.90px;font-size:15px;color:#000;"><span class="r" style="width:63.00px"><span style="transform:scaleX(0.9443)">9 : 30 [17]</span></span></span>
<svg style="left:1144px;top:1058px;" width="18" height="17" viewBox="0 0 18 17"><rect x="5" y="6" width="10" height="8" fill="#dce6f5" stroke="#6f8fc0"/><path d="M6 15.500h8" stroke="#6f8fc0"/><circle cx="5.500" cy="5.500" r="3.500" fill="#fbe08a" stroke="#d29a1c"/><path d="M8 2l3 2-3 2z" fill="#d29a1c"/><circle cx="7" cy="11" r="2.200" fill="#fff" stroke="#c8a85a" stroke-width=".7"/></svg>
<div style="left:1141px;top:1075px;width:40px;height:1px;background:#a0a0a0;"></div>
<div style="left:1180px;top:1054px;width:1px;height:22px;background:#a0a0a0;"></div>
<div style="left:1182.5px;top:1059.5px;width:2px;height:2px;background:#9a9a9a;"></div>
<div style="left:1182.5px;top:1064.1px;width:2px;height:2px;background:#9a9a9a;"></div>
<div style="left:1182.5px;top:1068.7px;width:2px;height:2px;background:#9a9a9a;"></div>
<div style="left:1182.5px;top:1073.3px;width:2px;height:2px;background:#9a9a9a;"></div>
<div style="left:1186px;top:1055px;width:151px;height:25px;background:#f0f0f0;border:1px solid #c0c0c0;border-top-color:#9a9a9a;box-sizing:border-box"></div>
<div style="left:1186.5px;top:1056px;width:14.3px;height:23px;background:#a0a0a0;"></div>
<div style="left:1200.8px;top:1056px;width:3.6px;height:23px;background:#ffb76b;"></div>
<span class="t" style="left:1221px;top:1057.76px;font-size:16px;color:#000;"><span class="r" style="width:88.00px"><span style="transform:scaleX(0.9423)">562M / 709M</span></span></span>
<div style="left:1331px;top:1057px;width:1px;height:22px;background:#e04646;"></div>
<svg style="left:1340px;top:1059px;" width="15" height="18" viewBox="0 0 15 18"><rect x="0" y="0" width="15" height="18" fill="#eef2fb" stroke="#c4cbe0" stroke-width=".5"/><path d="M2.500 4.500h10M5.500 4.500v-2h4v2M3.500 4.500l.7 11h6.600l.7-11" fill="#a9bde4" stroke="#3f62ae"/><path d="M6 7v6M9 7v6" stroke="#3f62ae"/></svg>
<div style="left:1359px;top:1059.5px;width:2px;height:2px;background:#9a9a9a;"></div>
<div style="left:1359px;top:1064.1px;width:2px;height:2px;background:#9a9a9a;"></div>
<div style="left:1359px;top:1068.7px;width:2px;height:2px;background:#9a9a9a;"></div>
<div style="left:1359px;top:1073.3px;width:2px;height:2px;background:#9a9a9a;"></div>
<div style="left:1716px;top:1059.5px;width:2px;height:2px;background:#9a9a9a;"></div>
<div style="left:1716px;top:1064.1px;width:2px;height:2px;background:#9a9a9a;"></div>
<div style="left:1716px;top:1068.7px;width:2px;height:2px;background:#9a9a9a;"></div>
<div style="left:1716px;top:1073.3px;width:2px;height:2px;background:#9a9a9a;"></div>
<span class="t" style="left:1728px;top:1059.30px;font-size:15px;color:#000;"><span class="r" style="width:38.00px"><span style="transform:scaleX(0.8941)">UTF-8</span></span></span>
<div style="left:1840px;top:1056px;width:1px;height:22px;background:#8c8c8c;"></div>
<span class="t" style="left:1850px;top:1059.30px;font-size:15px;color:#000;"><span class="r" style="width:32.00px"><span style="transform:scaleX(0.8169)">CRLF</span></span></span>
<div style="left:1893.5px;top:1059.5px;width:2px;height:2px;background:#a79d86;"></div>
<div style="left:1893.5px;top:1064.1px;width:2px;height:2px;background:#a79d86;"></div>
<div style="left:1893.5px;top:1068.7px;width:2px;height:2px;background:#a79d86;"></div>
<div style="left:1893.5px;top:1073.3px;width:2px;height:2px;background:#a79d86;"></div>
<svg style="left:1903px;top:1059px;" width="13" height="17" viewBox="0 0 13 17"><circle cx="6.500" cy="6" r="4.800" fill="#fff0b0" stroke="#f0a428" stroke-width="1.500"/><path d="M4.500 9.500h4l-.3 2.500h-3.400z" fill="#fbd46a" stroke="#f0a428" stroke-width=".6"/><rect x="4.300" y="12" width="4.400" height="3.500" rx="1" fill="#8796ad"/></svg>
<div style="left:1.8px;top:60.5px;width:1.5px;height:2px;background:#8f8a7c;"></div>
<div style="left:1.8px;top:65.1px;width:1.5px;height:2px;background:#8f8a7c;"></div>
<div style="left:1.8px;top:69.7px;width:1.5px;height:2px;background:#8f8a7c;"></div>
<div style="left:1.8px;top:74.3px;width:1.5px;height:2px;background:#8f8a7c;"></div>
<svg style="left:9.5px;top:60px;" width="16" height="16" viewBox="0 0 16 16"><rect x=".5" y="3.500" width="13" height="11" fill="#edf5fd" stroke="#b9a56a"/><path d="M3 13.500c5 0 8.500-2 9.500-6.500" fill="none" stroke="#f6e7b0" stroke-width="1.200"/><rect x="1" y="4" width="12" height="2.500" fill="#4d8fe0"/><path d="M12.300 .3l1.100 2.500 2.500 1.100-2.500 1.100-1.100 2.500-1.100-2.500-2.500-1.100 2.500-1.100z" fill="#fff6cf" stroke="#c69a2c" stroke-width="1"/></svg>
<svg style="left:33px;top:65.5px;" width="10" height="6" viewBox="0 0 10 6"><path d="M0 .5h9.400L4.700 5.400z" fill="#000"/></svg>
<svg style="left:50px;top:60px;" width="16.5" height="16.5" viewBox="0 0 16 16"><path d="M1.500 1.500h13v13h-13z" fill="#e4e4e4" stroke="#b5b5b5"/><rect x="4" y="1.500" width="8" height="5" fill="#f4f4f4" stroke="#b5b5b5" stroke-width=".8"/><rect x="4.500" y="9.500" width="7" height="5" fill="#d2d2d2" stroke="#b5b5b5" stroke-width=".8"/></svg>
<svg style="left:73.7px;top:60.5px;" width="15.8" height="15.8" viewBox="0 0 16 16"><path d="M.5.5h9v9h-9z" fill="#e8ebf1" stroke="#a9b4c9"/><path d="M3 3h9v9h-9z" fill="#e8ebf1" stroke="#a9b4c9"/><path d="M5.500 5.500h10v10h-10z" fill="#dfe5f0" stroke="#8fa0c0"/><rect x="8" y="5.500" width="5" height="3.500" fill="#f4f6fa" stroke="#8fa0c0" stroke-width=".7"/><rect x="8" y="11.500" width="5" height="4" fill="#5f7db8"/></svg>
<div style="left:94px;top:60.5px;width:2px;height:2px;background:#a79d86;"></div>
<div style="left:94px;top:65.1px;width:2px;height:2px;background:#a79d86;"></div>
<div style="left:94px;top:69.7px;width:2px;height:2px;background:#a79d86;"></div>
<div style="left:94px;top:74.3px;width:2px;height:2px;background:#a79d86;"></div>
<svg style="left:101.5px;top:61px;" width="15" height="15" viewBox="0 0 16 16"><rect x="1.500" y="1.500" width="13" height="10" rx="1.500" fill="#fff" stroke="#2f62b5" stroke-width="2"/><path d="M4.500 5h6M4.500 7.800h4" stroke="#2f62b5" stroke-width="1.200"/><path d="M3.500 14.500h9M8 12v2.500" stroke="#2f62b5" stroke-width="1.800"/></svg>
<div style="left:122px;top:60.5px;width:2px;height:2px;background:#a79d86;"></div>
<div style="left:122px;top:65.1px;width:2px;height:2px;background:#a79d86;"></div>
<div style="left:122px;top:69.7px;width:2px;height:2px;background:#a79d86;"></div>
<div style="left:122px;top:74.3px;width:2px;height:2px;background:#a79d86;"></div>
<svg style="left:129px;top:60px;" width="16" height="16" viewBox="0 0 16 16"><circle cx="8" cy="8" r="8" fill="#2a7ab8"/><circle cx="8" cy="8" r="4.300" fill="none" stroke="#fff" stroke-width="2.200" stroke-dasharray="1.700 1.680"/><circle cx="8" cy="8" r="3.300" fill="#fff"/><circle cx="8" cy="8" r="1.500" fill="#2a7ab8"/></svg>
<div style="left:150.5px;top:60.5px;width:2px;height:2px;background:#a79d86;"></div>
<div style="left:150.5px;top:65.1px;width:2px;height:2px;background:#a79d86;"></div>
<div style="left:150.5px;top:69.7px;width:2px;height:2px;background:#a79d86;"></div>
<div style="left:150.5px;top:74.3px;width:2px;height:2px;background:#a79d86;"></div>
<svg style="left:157.5px;top:60.5px;" width="15" height="15" viewBox="0 0 16 16"><path d="M8 .8l6.200 3.600v7.200L8 15.200 1.800 11.600V4.400z" fill="#0d9a0d"/><path d="M5.700 5.500a3.500 3.500 0 1 0 4.600 0" fill="none" stroke="#fff" stroke-width="1.300"/><path d="M8 3.800v4" stroke="#fff" stroke-width="1.300"/></svg>
<div style="left:178px;top:60.5px;width:2px;height:2px;background:#a79d86;"></div>
<div style="left:178px;top:65.1px;width:2px;height:2px;background:#a79d86;"></div>
<div style="left:178px;top:69.7px;width:2px;height:2px;background:#a79d86;"></div>
<div style="left:178px;top:74.3px;width:2px;height:2px;background:#a79d86;"></div>
<svg style="left:186.5px;top:60px;" width="15" height="16" viewBox="0 0 16 16"><path d="M2 3l3 3M14 3l-3 3M1 9h3M15 9h-3M2.500 15l2.500-3M13.500 15l-2.500-3M6 2.500l1 2M10 2.500l-1 2" stroke="#35506a" stroke-width="1.100"/><ellipse cx="8" cy="9.500" rx="3.800" ry="5" fill="#8fb07a" stroke="#3e5d4a"/><ellipse cx="8" cy="5" rx="2.200" ry="1.700" fill="#4d6a7c"/><ellipse cx="7" cy="9" rx="1.300" ry="2.500" fill="#c2dcae"/></svg>
<svg style="left:210px;top:65.5px;" width="10" height="6" viewBox="0 0 10 6"><path d="M0 .5h9.400L4.700 5.400z" fill="#000"/></svg>
<svg style="left:228px;top:60px;" width="16" height="16" viewBox="0 0 16 16"><circle cx="8" cy="8" r="7.800" fill="#2e8f2e"/><circle cx="8" cy="8" r="6.500" fill="#4cb648"/><path d="M5.800 3.800l6.200 4.200-6.200 4.200z" fill="#fff"/></svg>
<svg style="left:252px;top:65.5px;" width="10" height="6" viewBox="0 0 10 6"><path d="M0 .5h9.400L4.700 5.400z" fill="#000"/></svg>
<svg style="left:269.5px;top:60px;" width="17" height="16" viewBox="0 0 16 16"><circle cx="6" cy="5.500" r="5.500" fill="#2e8f2e"/><circle cx="6" cy="5.500" r="4.400" fill="#4cb648"/><path d="M4.500 2.800l4.200 2.700-4.200 2.700z" fill="#fff"/><rect x="6.500" y="10" width="9" height="5.500" rx=".8" fill="#e01b24"/><path d="M9 10v-1.500h4V10" fill="none" stroke="#e01b24" stroke-width="1.200"/><path d="M6.500 12.500h9" stroke="#fff" stroke-width=".8"/></svg>
<svg style="left:293.5px;top:65.5px;" width="10" height="6" viewBox="0 0 10 6"><path d="M0 .5h9.400L4.700 5.400z" fill="#000"/></svg>
<svg style="left:314px;top:61.5px;" width="14" height="14" viewBox="0 0 16 16"><rect x="2.500" y="2.500" width="11" height="11" fill="#d8bcc0" stroke="#c4b4b4"/></svg>
<svg style="left:335.5px;top:65.5px;" width="10" height="6" viewBox="0 0 10 6"><path d="M0 .5h9.400L4.700 5.400z" fill="#6e6e6e"/></svg>
<svg style="left:355.5px;top:60px;" width="15" height="15" viewBox="0 0 16 16"><rect x="1" y=".5" width="9" height="9" fill="#dcc4c6" stroke="#c4b8b8"/><path d="M8.500 8l6 3.500-6 3.500z" fill="#b9c9b4" stroke="#a4b4a0" stroke-width=".6"/></svg>
<svg style="left:377.5px;top:65.5px;" width="10" height="6" viewBox="0 0 10 6"><path d="M0 .5h9.400L4.700 5.400z" fill="#6e6e6e"/></svg>
<div style="left:393.5px;top:60.5px;width:2px;height:2px;background:#a79d86;"></div>
<div style="left:393.5px;top:65.1px;width:2px;height:2px;background:#a79d86;"></div>
<div style="left:393.5px;top:69.7px;width:2px;height:2px;background:#a79d86;"></div>
<div style="left:393.5px;top:74.3px;width:2px;height:2px;background:#a79d86;"></div>
<svg style="left:401px;top:60px;" width="16" height="16" viewBox="0 0 16 16"><rect x="1.500" y="3.500" width="11" height="11" fill="#e8c9a0" stroke="#a0703c"/><path d="M7 2v14M0 9h14" stroke="#8a5a2b" stroke-width="1.400"/><path d="M12.500 0l1 2.300 2 .7-2 .900-1 2.300-1-2.300-2-.9 2-.700z" fill="#fff2b8" stroke="#c69a2c" stroke-width=".800"/></svg>
<svg style="left:425.5px;top:60px;" width="16" height="16" viewBox="0 0 16 16"><circle cx="7" cy="9" r="6.800" fill="#2f9a3c"/><text x="3.200" y="12.700" font-family="Liberation Sans,sans-serif" font-weight="bold" font-size="10.500" fill="#fff">C</text><path d="M12.500 0l1 2.300 2 .7-2 .900-1 2.300-1-2.300-2-.9 2-.700z" fill="#fff2b8" stroke="#c69a2c" stroke-width=".800"/></svg>
<svg style="left:447.5px;top:65.5px;" width="10" height="6" viewBox="0 0 10 6"><path d="M0 .5h9.400L4.700 5.400z" fill="#000"/></svg>
<div style="left:463.5px;top:60.5px;width:2px;height:2px;background:#a79d86;"></div>
<div style="left:463.5px;top:65.1px;width:2px;height:2px;background:#a79d86;"></div>
<div style="left:463.5px;top:69.7px;width:2px;height:2px;background:#a79d86;"></div>
<div style="left:463.5px;top:74.3px;width:2px;height:2px;background:#a79d86;"></div>
<svg style="left:470px;top:60px;" width="16" height="16" viewBox="0 0 16 16"><path d="M1.500 13.500v-8h4l1.500 1.500h5v2" fill="#fbe3a4" stroke="#c8862a"/><path d="M1.500 13.500l2.500-5h11l-2.500 5z" fill="#fdeec0" stroke="#c8862a"/><rect x="6.500" y="1.500" width="6" height="7" fill="#fff" stroke="#9fb0c8" stroke-width=".8"/><path d="M7.800 3.500h3.500M7.800 5h3.500M7.800 6.500h3.500" stroke="#4f7fc8" stroke-width=".8"/></svg>
<svg style="left:493px;top:60px;" width="16" height="16" viewBox="0 0 16 16"><path d="M1.500 13.500v-8h4l1.500 1.500h5v2" fill="#fbe3a4" stroke="#c8862a"/><path d="M1.500 13.500l2.500-5h11l-2.500 5z" fill="#fdeec0" stroke="#c8862a"/><circle cx="6" cy="4" r="3.300" fill="#6a4fa8"/><circle cx="11" cy="6" r="3" fill="#3c9a4a"/></svg>
<svg style="left:516px;top:60px;" width="16" height="16" viewBox="0 0 16 16"><path d="M1.500 13.500v-8h4l1.500 1.500h5v2" fill="#fbe3a4" stroke="#c8862a"/><path d="M1.500 13.500l2.500-5h11l-2.500 5z" fill="#fdeec0" stroke="#c8862a"/><rect x="6.500" y="3" width="6" height="4.500" fill="#eef2fa" stroke="#8a9ab8" stroke-width=".9"/><path d="M8 3v-1.200h3V3" fill="none" stroke="#8a9ab8"/></svg>
<svg style="left:540px;top:60px;" width="16" height="16" viewBox="0 0 16 16"><path d="M1.500 15l2-5.500 8-8 3 3-8 8z" fill="#f6d58a" stroke="#c8902c" stroke-width=".9"/><path d="M4.500 8.500l3 3" stroke="#8a8a8a" stroke-width="2.600"/><path d="M1.500 15l1-3 2 2z" fill="#fff"/><path d="M10 3l3 3" stroke="#c8902c" stroke-width=".8"/></svg>
<svg style="left:563.5px;top:65.5px;" width="10" height="6" viewBox="0 0 10 6"><path d="M0 .5h9.400L4.700 5.400z" fill="#000"/></svg>
<div style="left:579.5px;top:60.5px;width:2px;height:2px;background:#a79d86;"></div>
<div style="left:579.5px;top:65.1px;width:2px;height:2px;background:#a79d86;"></div>
<div style="left:579.5px;top:69.7px;width:2px;height:2px;background:#a79d86;"></div>
<div style="left:579.5px;top:74.3px;width:2px;height:2px;background:#a79d86;"></div>
<svg style="left:586px;top:60px;" width="16" height="16" viewBox="0 0 16 16"><rect x="1.500" y="2.500" width="8" height="6" fill="#dfe3f0" stroke="#8f9ab8"/><path d="M5 7.500l6 4-6 4z" fill="#222"/><circle cx="11.500" cy="4.500" r="4" fill="#2f9a3c"/><text x="9.300" y="6.800" font-family="Liberation Sans,sans-serif" font-weight="bold" font-size="6.500" fill="#fff">C</text></svg>
<div style="left:606.5px;top:56.5px;width:22px;height:21px;background:#b9d4f4;border:1px solid #8fbcec;box-sizing:border-box"></div>
<svg style="left:610px;top:60px;" width="16" height="16" viewBox="0 0 16 16"><path d="M13.500.5l2 1-4.500 10-4-2z" fill="#a4977c" stroke="#8a7d62" stroke-width=".6"/><path d="M7 9.500l4 2-2 3.500-5.500-1z" fill="#fbe36a" stroke="#e6c42c" stroke-width=".6"/><path d="M1 15.200h6" stroke="#e6c42c" stroke-width="1.300"/></svg>
<svg style="left:634px;top:61px;" width="15" height="15" viewBox="0 0 16 16"><circle cx="5" cy="4" r="3" fill="#d6d6d6"/><circle cx="11" cy="6" r="3" fill="#cfcfcf"/><circle cx="5.500" cy="10.500" r="3.500" fill="#b0b0b0"/><path d="M11 11l3-3v2.200" fill="none" stroke="#c8c8c8"/></svg>
<svg style="left:656.5px;top:60px;" width="15" height="15" viewBox="0 0 16 16"><rect x="1.500" y="1.500" width="10" height="12" fill="#fff" stroke="#b9a56a"/><path d="M3.500 4h6M3.500 6h6M3.500 8h4M3.500 10h5" stroke="#5b7fc4" stroke-width=".9"/><path d="M15 3.500v6h-7" fill="none" stroke="#c8902c" stroke-width="2.200"/><path d="M9.500 6.500l-3.500 3 3.500 3z" fill="#f6d58a" stroke="#c8902c" stroke-width=".8"/></svg>
<svg style="left:679px;top:61px;" width="15" height="15" viewBox="0 0 16 16"><rect x="1.500" y="1.500" width="13" height="13" fill="#fdfcf6" stroke="#b9a56a"/><rect x="4.500" y="3.500" width="7" height="9" fill="#fff" stroke="#4f7fc8" stroke-width=".9"/><path d="M6 5.500h4M6 7.500h4M6 9.500h4M6 11h4M2.500 4v8M13.500 4v8" stroke="#4f7fc8" stroke-width=".8" stroke-dasharray="1 1"/></svg>
<div style="left:698.5px;top:56.5px;width:22px;height:21px;background:#b9d4f4;border:1px solid #8fbcec;box-sizing:border-box"></div>
<svg style="left:703.5px;top:62.5px;" width="13" height="13" viewBox="0 0 16 16"><path d="M8.500 14V2.500M11 14V2.500M12.500 2.500H7a3 3 0 0 0 0 6h1.500" fill="none" stroke="#4f8fd0" stroke-width="1.500"/><path d="M7 2.500a3 3 0 0 0 0 6h1.500v-6z" fill="#4f8fd0"/></svg>
<div style="left:722.5px;top:60.5px;width:2px;height:2px;background:#a79d86;"></div>
<div style="left:722.5px;top:65.1px;width:2px;height:2px;background:#a79d86;"></div>
<div style="left:722.5px;top:69.7px;width:2px;height:2px;background:#a79d86;"></div>
<div style="left:722.5px;top:74.3px;width:2px;height:2px;background:#a79d86;"></div>
<svg style="left:730.5px;top:60px;" width="16" height="16" viewBox="0 0 16 16"><path d="M3 .5h4v5h2.500L5 10.500.5 5.500H3z" fill="#fbe08a" stroke="#c8862a" stroke-width=".9"/><path d="M9 6.500h5M9 9h5M9 11.500h5M5 13.500h9" stroke="#c4c8d4" stroke-width=".9"/><path d="M15 2v13" stroke="#aeb4c4"/><rect x="1.500" y="12.500" width="4" height="2" fill="#3f6fc0"/></svg>
<svg style="left:753.5px;top:65.5px;" width="10" height="6" viewBox="0 0 10 6"><path d="M0 .5h9.400L4.700 5.400z" fill="#000"/></svg>
<svg style="left:772.5px;top:60px;" width="16" height="16" viewBox="0 0 16 16"><path d="M3 15.500h4v-5h2.500L5 5.500.5 10.500H3z" fill="#fbe08a" stroke="#c8862a" stroke-width=".900"/><path d="M9 4h5M9 6.500h5M9 9h5M9 11.500h5" stroke="#c4c8d4" stroke-width=".900"/><path d="M15 1v13" stroke="#aeb4c4"/><rect x="1.500" y="1.500" width="4" height="2" fill="#3f6fc0"/></svg>
<svg style="left:795.5px;top:65.5px;" width="10" height="6" viewBox="0 0 10 6"><path d="M0 .5h9.400L4.700 5.400z" fill="#000"/></svg>
<svg style="left:813px;top:60px;" width="16" height="16" viewBox="0 0 16 16"><path d="M16 5.500h-6.500V2.500L3.500 8l6 5.500v-3H16z" fill="#fbe9a8" stroke="#c8862a"/><path d="M2.500 1v5M.4 2.200l4.200 2.600M4.600 2.200L.4 4.800" stroke="#2f4f9a" stroke-width="1"/></svg>
<svg style="left:837px;top:60px;" width="16" height="16" viewBox="0 0 16 16"><path d="M15.500 5.500H8.500V2.500L1.500 8l7 5.500v-3h7z" fill="#fbe9a8" stroke="#c8862a"/></svg>
<svg style="left:861px;top:65.5px;" width="10" height="6" viewBox="0 0 10 6"><path d="M0 .5h9.400L4.700 5.400z" fill="#000"/></svg>
<svg style="left:879px;top:60px;" width="16" height="16" viewBox="0 0 16 16"><path d="M.5 5.500H7.500V2.500L14.500 8l-7 5.500v-3h-7z" fill="#f4f4f4" stroke="#c4c4c4"/></svg>
<svg style="left:902.5px;top:65.5px;" width="10" height="6" viewBox="0 0 10 6"><path d="M0 .5h9.400L4.700 5.400z" fill="#6e6e6e"/></svg>
<div style="left:919px;top:59px;width:1px;height:18px;background:#8a8a8a;"></div>
<svg style="left:927.5px;top:60px;" width="16" height="16" viewBox="0 0 16 16"><rect x=".5" y="3.500" width="13" height="11" fill="#fff" stroke="#b9a56a"/><rect x="1" y="4" width="12" height="2.500" fill="#8fb4e8"/><path d="M9 8.500l3-5 3 2-4 4z" fill="#3c9a3c" stroke="#2a7a2a" stroke-width=".7"/><path d="M9.500 8.500l-2 2.500" stroke="#555" stroke-width="1"/></svg>
<svg style="left:1790px;top:61px;" width="15" height="15" viewBox="0 0 16 16"><circle cx="6" cy="6" r="4.300" fill="none" stroke="#6a6a6a" stroke-width="1.800"/><path d="M9.300 9.300l5 5" stroke="#6a6a6a" stroke-width="2.400"/></svg>
<div style="left:1821px;top:60.5px;width:2px;height:2px;background:#a79d86;"></div>
<div style="left:1821px;top:65.1px;width:2px;height:2px;background:#a79d86;"></div>
<div style="left:1821px;top:69.7px;width:2px;height:2px;background:#a79d86;"></div>
<div style="left:1821px;top:74.3px;width:2px;height:2px;background:#a79d86;"></div>
<svg style="left:1828.5px;top:60px;" width="16" height="16" viewBox="0 0 16 16"><rect x=".5" y="3.500" width="13" height="11" fill="#fff" stroke="#8a8a8a"/><rect x="1" y="4" width="12" height="2.500" fill="#4d8fe0"/><path d="M5.500 6.500v8M5.500 10.500h8" stroke="#b9a56a"/><path d="M12.500 0l1 2.300 2 .7-2 .900-1 2.300-1-2.300-2-.9 2-.700z" fill="#fff2b8" stroke="#c69a2c" stroke-width=".800"/></svg>
<div style="left:1851.5px;top:58px;width:1px;height:20px;background:#8a8a8a;"></div>
<div style="left:1856.5px;top:55px;width:60px;height:24.5px;background:#b9d4f4;border:1px solid #8fbcec;box-sizing:border-box"></div>
<svg style="left:1861px;top:60px;" width="16" height="16" viewBox="0 0 16 16"><rect x="2.500" y="1.500" width="7" height="6" fill="#e8c9a0" stroke="#8a5a2b"/><path d="M6 .5v8M1.500 4.500h9" stroke="#8a5a2b"/><circle cx="4.500" cy="10" r="3.300" fill="#3c9a4a"/><circle cx="9" cy="12.500" r="3.300" fill="#6a4fa8"/><text x="10.800" y="7.500" font-family="Liberation Sans,sans-serif" font-weight="bold" font-size="8.500" fill="#c4244c">J</text></svg>
<span class="t" style="left:1881px;top:58.80px;font-size:15px;color:#000;"><span class="r" style="width:27.50px"><span style="transform:scaleX(0.8679)">Java</span></span></span>
</body></html>
